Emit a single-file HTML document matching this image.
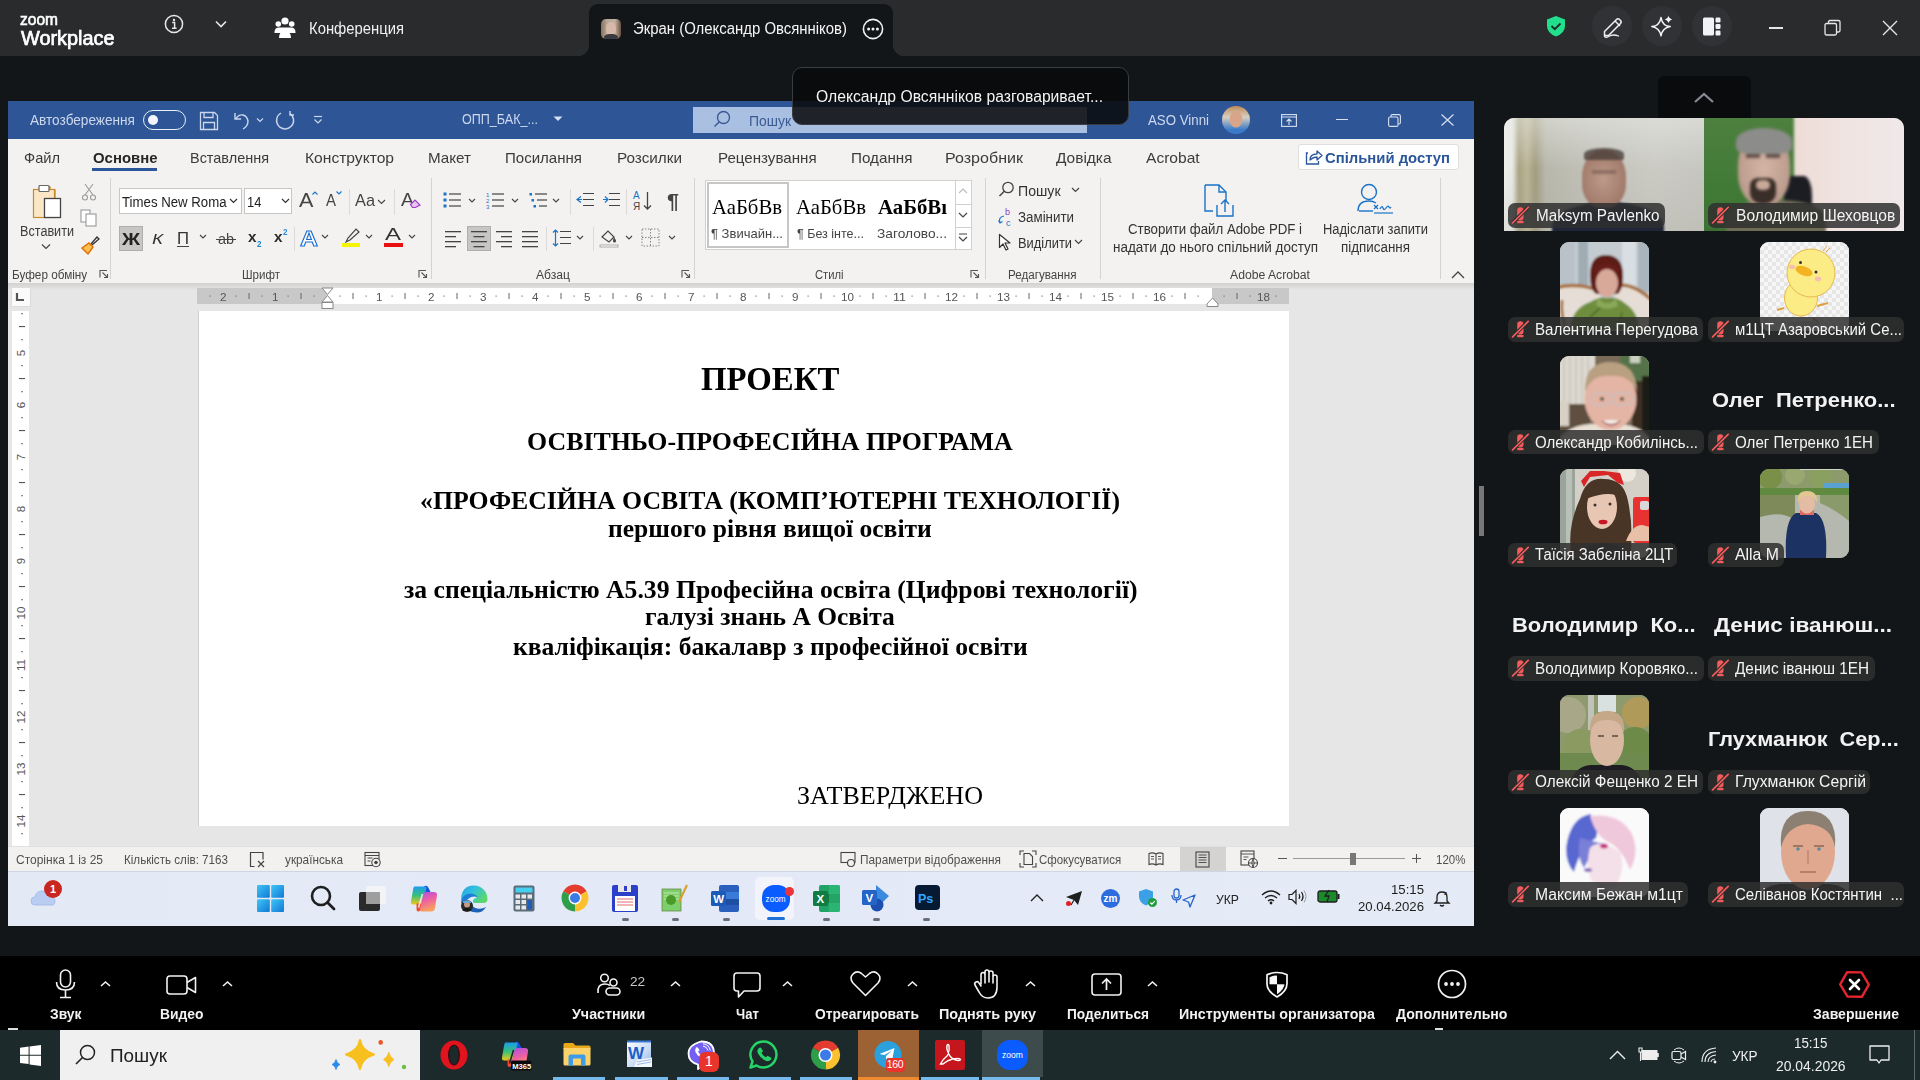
<!DOCTYPE html>
<html><head><meta charset="utf-8">
<style>
*{margin:0;padding:0;box-sizing:border-box}
html,body{width:1920px;height:1080px;overflow:hidden;background:#131619;font-family:"Liberation Sans",sans-serif;position:relative}
.a{position:absolute}
.t{position:absolute;white-space:pre;line-height:normal;transform-origin:0 0}
svg.a{overflow:visible}
</style></head><body>
<div class="a" style="left:0px;top:0px;width:1920px;height:56px;background:#2a2b2d;"></div>
<div class="a" style="left:589px;top:4px;width:304px;height:52px;background:#131619;border-radius:9px 9px 0 0"></div>
<div class="a" style="left:577px;top:44px;width:12px;height:12px;background:radial-gradient(circle at 0 0,#2a2b2d 12px,#131619 12.7px)"></div>
<div class="a" style="left:893px;top:44px;width:12px;height:12px;background:radial-gradient(circle at 100% 0,#2a2b2d 12px,#131619 12.7px)"></div>
<div class="t" style="left:20px;top:9.87px;font-family:'Liberation Sans',sans-serif;font-size:16.5px;color:#fff;transform:scaleX(0.9415);-webkit-text-stroke:0.6px #fff;">zoom</div>
<div class="t" style="left:20.5px;top:26.80px;font-family:'Liberation Sans',sans-serif;font-size:20px;color:#fff;transform:scaleX(0.9934);-webkit-text-stroke:0.7px #fff;">Workplace</div>
<svg class="a" style="left:164px;top:14px;" width="20" height="20" viewBox="0 0 20 20"><circle cx="10" cy="10" r="8.6" fill="none" stroke="#e8e8e8" stroke-width="1.5"/><circle cx="10" cy="6" r="1.2" fill="#e8e8e8"/><path d="M8.2 8.6h2.4v5.6M8 14.3h4.6" stroke="#e8e8e8" stroke-width="1.5" fill="none"/></svg>
<svg class="a" style="left:214px;top:19px;" width="14" height="10" viewBox="0 0 14 10"><path d="M2 2.5l5 5 5-5" stroke="#e8e8e8" stroke-width="1.6" fill="none"/></svg>
<svg class="a" style="left:274px;top:16px;" width="22" height="23" viewBox="0 0 22 23"><circle cx="11" cy="5" r="3.6" fill="#fff"/><circle cx="4.3" cy="8" r="2.8" fill="#fff"/><circle cx="17.7" cy="8" r="2.8" fill="#fff"/><path d="M0.5 16.5q0-5 4.5-5h12q4.5 0 4.5 5v0.5h-21z" fill="#fff"/><path d="M5 22q0-7 6-7t6 7z" fill="#fff"/></svg>
<div class="t" style="left:309px;top:19.52px;font-family:'Liberation Sans',sans-serif;font-size:16px;color:#f0f0f0;transform:scaleX(0.9267);">Конференция</div>
<div class="a" style="left:601px;top:19px;width:20px;height:20px;border-radius:5px;overflow:hidden;background:linear-gradient(90deg,#8a7060,#b8a898 30%,#c0b0a0 70%,#6a5040)"><div class="a" style="left:5px;top:3px;width:10px;height:14px;border-radius:45%;background:#d8b8a8;filter:blur(0.6px)"></div><div class="a" style="left:3px;top:15px;width:14px;height:8px;border-radius:40% 40% 0 0;background:#3a3a40"></div></div>
<div class="t" style="left:633px;top:20.02px;font-family:'Liberation Sans',sans-serif;font-size:16px;color:#f4f4f4;transform:scaleX(0.9322);">Экран (Олександр Овсянніков)</div>
<svg class="a" style="left:862px;top:18px;" width="22" height="22" viewBox="0 0 22 22"><circle cx="11" cy="11" r="9.6" fill="none" stroke="#f0f0f0" stroke-width="1.6"/><circle cx="6.6" cy="11" r="1.5" fill="#f0f0f0"/><circle cx="11" cy="11" r="1.5" fill="#f0f0f0"/><circle cx="15.4" cy="11" r="1.5" fill="#f0f0f0"/></svg>
<svg class="a" style="left:1546px;top:15px;" width="20" height="22" viewBox="0 0 20 22"><path d="M10 1L19 4.5v6.5q0 7-9 10.5Q1 18 1 11V4.5z" fill="#21df8c"/><path d="M5.5 11l3.3 3.2L14.5 8.5" stroke="#1d2a24" stroke-width="1.8" fill="none"/></svg>
<div class="a" style="left:1592px;top:6px;width:40px;height:40px;border-radius:50%;background:#313235"></div>
<div class="a" style="left:1642px;top:6px;width:40px;height:40px;border-radius:50%;background:#313235"></div>
<div class="a" style="left:1692px;top:6px;width:40px;height:40px;border-radius:50%;background:#313235"></div>
<svg class="a" style="left:1601px;top:14px;" width="22" height="24" viewBox="0 0 22 24"><path d="M3.5 17.5L15.5 5.5Q17 4 18.5 5.5L19.5 6.5Q21 8 19.5 9.5L7.5 21.5H3.5z" fill="none" stroke="#f0f0f0" stroke-width="1.5" stroke-linejoin="round"/><path d="M14 7l5 5" stroke="#f0f0f0" stroke-width="1.4"/><path d="M3.5 22.5q1.5 1.5 4 0t5-1.5 5 1" fill="none" stroke="#f0f0f0" stroke-width="1.3" stroke-linecap="round"/></svg>
<svg class="a" style="left:1650px;top:14px;" width="24" height="24" viewBox="0 0 24 24"><path d="M11 3.6Q12.5 12 20.2 12.6Q12.5 14 11 21.8Q9.5 14 1.8 12.6Q9.5 12 11 3.6z" stroke="#f4f4f4" stroke-width="1.5" fill="none" stroke-linejoin="round"/><path d="M18.5 1.5Q19 4.6 22.3 5.4Q19 6.2 18.5 9.3Q18 6.2 14.7 5.4Q18 4.6 18.5 1.5z" fill="#f4f4f4"/></svg>
<svg class="a" style="left:1702px;top:17px;" width="20" height="19" viewBox="0 0 20 19"><rect x="1" y="0.5" width="11" height="18" rx="1.5" fill="#f2f2f4"/><rect x="13.5" y="0.5" width="5" height="5" rx="1.2" fill="#f2f2f4"/><rect x="13.5" y="7" width="5" height="5" rx="1.2" fill="#f2f2f4"/><rect x="13.5" y="13.5" width="5" height="5" rx="1.2" fill="#f2f2f4"/></svg>
<div class="a" style="left:1769px;top:27px;width:14px;height:1.6px;background:#e6e6e6;"></div>
<svg class="a" style="left:1824px;top:19px;" width="18" height="18" viewBox="0 0 18 18"><rect x="1" y="4.5" width="11.5" height="11.5" rx="1.5" fill="none" stroke="#e6e6e6" stroke-width="1.3"/><path d="M4.5 4.5V3q0-1.5 1.5-1.5h8.5q1.5 0 1.5 1.5v8.5q0 1.5-1.5 1.5H12.5" fill="none" stroke="#e6e6e6" stroke-width="1.3"/></svg>
<svg class="a" style="left:1882px;top:20px;" width="16" height="16" viewBox="0 0 16 16"><path d="M1 1L15 15M15 1L1 15" stroke="#e6e6e6" stroke-width="1.4"/></svg>
<div class="a" style="left:8px;top:101px;width:1466px;height:825px;background:#e6e6e6;"></div>
<div class="a" style="left:8px;top:101px;width:1466px;height:38px;background:#2e5596;"></div>
<div class="t" style="left:30px;top:111.68px;font-family:'Liberation Sans',sans-serif;font-size:14.5px;color:#cdd8ee;transform:scaleX(0.9397);">Автозбереження</div>
<div class="a" style="left:143px;top:110px;width:43px;height:20px;border:1.5px solid #e8eef8;border-radius:10px"></div>
<div class="a" style="left:148px;top:115px;width:10px;height:10px;border-radius:50%;background:#f2f6fc"></div>
<svg class="a" style="left:199px;top:111px;" width="20" height="20" viewBox="0 0 20 20"><path d="M1.5 1.5h14l3 3v14h-17z" fill="none" stroke="#c9d6ec" stroke-width="1.3"/><path d="M5 1.5v5h9v-5M4.5 18.5v-7h11v7" fill="none" stroke="#c9d6ec" stroke-width="1.3"/></svg>
<svg class="a" style="left:231px;top:111px;" width="20" height="20" viewBox="0 0 20 20"><path d="M4 2v6h6" fill="none" stroke="#c9d6ec" stroke-width="1.4"/><path d="M4.5 8Q8 3 12 4t5 6q0 5-5 8" fill="none" stroke="#c9d6ec" stroke-width="1.4"/></svg>
<svg class="a" style="left:256px;top:117px;" width="8" height="6" viewBox="0 0 8 6"><path d="M1 1.5l3 3 3-3" fill="none" stroke="#c9d6ec" stroke-width="1.2"/></svg>
<svg class="a" style="left:275px;top:110px;" width="21" height="21" viewBox="0 0 21 21"><path d="M15 3.5A8.5 8.5 0 1 1 6 3" fill="none" stroke="#c9d6ec" stroke-width="1.4"/><path d="M15 1v4h4" fill="none" stroke="#c9d6ec" stroke-width="1.4"/></svg>
<svg class="a" style="left:313px;top:115px;" width="10" height="10" viewBox="0 0 10 10"><path d="M1 1.5h8" stroke="#c9d6ec" stroke-width="1.2"/><path d="M1.5 4.5l3.5 3.5 3.5-3.5" fill="none" stroke="#c9d6ec" stroke-width="1.2"/></svg>
<div class="t" style="left:462px;top:111.48px;font-family:'Liberation Sans',sans-serif;font-size:14.5px;color:#cdd8ee;transform:scaleX(0.8670);">ОПП_БАК_...</div>
<svg class="a" style="left:553px;top:116px;" width="10" height="6" viewBox="0 0 10 6"><path d="M0.5 0.5h9l-4.5 4.5z" fill="#d6e0f0"/></svg>
<div class="a" style="left:693px;top:107px;width:394px;height:26px;background:#aac0e2;"></div>
<svg class="a" style="left:713px;top:110px;" width="18" height="19" viewBox="0 0 18 19"><circle cx="10.5" cy="7.5" r="6" fill="none" stroke="#3b5a93" stroke-width="1.4"/><path d="M6.3 11.7L1.5 16.5" stroke="#3b5a93" stroke-width="1.5"/></svg>
<div class="t" style="left:749px;top:112.88px;font-family:'Liberation Sans',sans-serif;font-size:14.5px;color:#3b5a93;transform:scaleX(0.9607);">Пошук</div>
<div class="t" style="left:1148px;top:111.88px;font-family:'Liberation Sans',sans-serif;font-size:14.5px;color:#cdd8ee;transform:scaleX(0.9154);">ASO Vinni</div>
<div class="a" style="left:1222px;top:106px;width:28px;height:28px;border-radius:50%;background:radial-gradient(ellipse 40% 50% at 50% 48%,#d9a58a 0 55%,transparent 60%),linear-gradient(180deg,#c08a5a 0,#d8cfc0 40%,#3a7ac8 85%)"></div>
<svg class="a" style="left:1281px;top:114px;" width="16" height="13" viewBox="0 0 16 13"><rect x="0.6" y="0.6" width="14.8" height="11.8" fill="none" stroke="#d6e0f0" stroke-width="1.1"/><path d="M0.6 3h14.8M8 11V5M5.5 7.5L8 5l2.5 2.5" fill="none" stroke="#d6e0f0" stroke-width="1.1"/></svg>
<div class="a" style="left:1336px;top:119px;width:12px;height:1.2px;background:#d6e0f0;"></div>
<svg class="a" style="left:1388px;top:114px;" width="13" height="13" viewBox="0 0 13 13"><rect x="0.6" y="3" width="9.4" height="9.4" rx="1.5" fill="none" stroke="#d6e0f0" stroke-width="1.1"/><path d="M3 3V2q0-1.4 1.4-1.4h6.6q1.4 0 1.4 1.4v6.6q0 1.4-1.4 1.4H10" fill="none" stroke="#d6e0f0" stroke-width="1.1"/></svg>
<svg class="a" style="left:1441px;top:114px;" width="13" height="12" viewBox="0 0 13 12"><path d="M0.5 0.5L12.5 11.5M12.5 0.5L0.5 11.5" stroke="#d6e0f0" stroke-width="1.2"/></svg>
<div class="a" style="left:8px;top:139px;width:1466px;height:145px;background:#f3f2f1;"></div>
<div class="a" style="left:8px;top:283px;width:1466px;height:7px;background:linear-gradient(180deg,#d2d1d0,#e6e6e6)"></div>
<div class="t" style="left:24px;top:148.93px;font-family:'Liberation Sans',sans-serif;font-size:15px;color:#3b3b3b;transform:scaleX(0.9759);">Файл</div>
<div class="t" style="left:92.5px;top:148.93px;font-family:'Liberation Sans',sans-serif;font-size:15px;font-weight:bold;color:#262626;transform:scaleX(0.9945);">Основне</div>
<div class="t" style="left:189.6px;top:148.93px;font-family:'Liberation Sans',sans-serif;font-size:15px;color:#3b3b3b;transform:scaleX(0.9638);">Вставлення</div>
<div class="t" style="left:305px;top:148.93px;font-family:'Liberation Sans',sans-serif;font-size:15px;color:#3b3b3b;transform:scaleX(1.0406);">Конструктор</div>
<div class="t" style="left:428px;top:148.93px;font-family:'Liberation Sans',sans-serif;font-size:15px;color:#3b3b3b;transform:scaleX(1.0129);">Макет</div>
<div class="t" style="left:505px;top:148.93px;font-family:'Liberation Sans',sans-serif;font-size:15px;color:#3b3b3b;transform:scaleX(1.0026);">Посилання</div>
<div class="t" style="left:617px;top:148.93px;font-family:'Liberation Sans',sans-serif;font-size:15px;color:#3b3b3b;transform:scaleX(1.0186);">Розсилки</div>
<div class="t" style="left:718px;top:148.93px;font-family:'Liberation Sans',sans-serif;font-size:15px;color:#3b3b3b;transform:scaleX(1.0084);">Рецензування</div>
<div class="t" style="left:851px;top:148.93px;font-family:'Liberation Sans',sans-serif;font-size:15px;color:#3b3b3b;transform:scaleX(1.0150);">Подання</div>
<div class="t" style="left:945px;top:148.93px;font-family:'Liberation Sans',sans-serif;font-size:15px;color:#3b3b3b;transform:scaleX(1.0699);">Розробник</div>
<div class="t" style="left:1056px;top:148.93px;font-family:'Liberation Sans',sans-serif;font-size:15px;color:#3b3b3b;transform:scaleX(1.0284);">Довідка</div>
<div class="t" style="left:1146px;top:148.93px;font-family:'Liberation Sans',sans-serif;font-size:15px;color:#3b3b3b;transform:scaleX(1.0386);">Acrobat</div>
<div class="a" style="left:92px;top:168px;width:65px;height:3px;background:#2b579a;"></div>
<div class="a" style="left:1298px;top:144px;width:161px;height:26px;background:#fff;border:1px solid #e1dfdd;border-radius:3px"></div>
<svg class="a" style="left:1305px;top:148px;" width="18" height="18" viewBox="0 0 18 18"><path d="M3 5H1.5v11h12v-3" fill="none" stroke="#2b579a" stroke-width="1.3"/><path d="M5 12q0-6 7-6V3l5 4.5-5 4.5V9q-4 0-7 3z" fill="none" stroke="#2b579a" stroke-width="1.3" stroke-linejoin="round"/></svg>
<div class="t" style="left:1325px;top:148.93px;font-family:'Liberation Sans',sans-serif;font-size:15px;font-weight:bold;color:#2b579a;transform:scaleX(0.9886);">Спільний доступ</div>
<div class="a" style="left:110px;top:178px;width:1px;height:101px;background:#d4d3d2;"></div>
<div class="a" style="left:431px;top:178px;width:1px;height:101px;background:#d4d3d2;"></div>
<div class="a" style="left:694px;top:178px;width:1px;height:101px;background:#d4d3d2;"></div>
<div class="a" style="left:985px;top:178px;width:1px;height:101px;background:#d4d3d2;"></div>
<div class="a" style="left:1100px;top:178px;width:1px;height:101px;background:#d4d3d2;"></div>
<div class="a" style="left:1440px;top:178px;width:1px;height:101px;background:#d4d3d2;"></div>
<div class="t" style="left:11.5px;top:267.69px;font-family:'Liberation Sans',sans-serif;font-size:12.5px;color:#444;transform:scaleX(0.9393);">Буфер обміну</div>
<div class="t" style="left:242px;top:267.69px;font-family:'Liberation Sans',sans-serif;font-size:12.5px;color:#444;transform:scaleX(0.9237);">Шрифт</div>
<div class="t" style="left:536px;top:267.69px;font-family:'Liberation Sans',sans-serif;font-size:12.5px;color:#444;transform:scaleX(0.9693);">Абзац</div>
<div class="t" style="left:815px;top:267.69px;font-family:'Liberation Sans',sans-serif;font-size:12.5px;color:#444;transform:scaleX(0.8959);">Стилі</div>
<div class="t" style="left:1007.5px;top:267.69px;font-family:'Liberation Sans',sans-serif;font-size:12.5px;color:#444;transform:scaleX(0.9312);">Редагування</div>
<div class="t" style="left:1230px;top:267.69px;font-family:'Liberation Sans',sans-serif;font-size:12.5px;color:#444;transform:scaleX(0.9754);">Adobe Acrobat</div>
<svg class="a" style="left:99px;top:269px;" width="10" height="10" viewBox="0 0 10 10"><path d="M1 8.5V1.5h7M3.5 3.5l5 5M8.5 5v3.5H5" fill="none" stroke="#555" stroke-width="1.1"/></svg>
<svg class="a" style="left:418px;top:269px;" width="10" height="10" viewBox="0 0 10 10"><path d="M1 8.5V1.5h7M3.5 3.5l5 5M8.5 5v3.5H5" fill="none" stroke="#555" stroke-width="1.1"/></svg>
<svg class="a" style="left:681px;top:269px;" width="10" height="10" viewBox="0 0 10 10"><path d="M1 8.5V1.5h7M3.5 3.5l5 5M8.5 5v3.5H5" fill="none" stroke="#555" stroke-width="1.1"/></svg>
<svg class="a" style="left:970px;top:269px;" width="10" height="10" viewBox="0 0 10 10"><path d="M1 8.5V1.5h7M3.5 3.5l5 5M8.5 5v3.5H5" fill="none" stroke="#555" stroke-width="1.1"/></svg>
<svg class="a" style="left:1451px;top:271px;" width="14" height="8" viewBox="0 0 14 8"><path d="M1 7l6-6 6 6" fill="none" stroke="#444" stroke-width="1.3"/></svg>
<svg class="a" style="left:31px;top:183px;" width="36" height="36" viewBox="0 0 36 36"><path d="M3 7h6V4h10v3h5v8" fill="none" stroke="#c98a2b" stroke-width="1.3"/><rect x="2.5" y="6.5" width="21" height="28" fill="#fbe7c6" stroke="#c98a2b" stroke-width="1.2"/><rect x="8" y="2.5" width="10" height="6" rx="1" fill="#fff" stroke="#666" stroke-width="1.2"/><rect x="13.5" y="15.5" width="16" height="19" fill="#fff" stroke="#444" stroke-width="1.3"/></svg>
<div class="t" style="left:20px;top:222.83px;font-family:'Liberation Sans',sans-serif;font-size:14px;color:#3b3b3b;transform:scaleX(0.9019);">Вставити</div>
<svg class="a" style="left:41px;top:243px;" width="10" height="7" viewBox="0 0 10 7"><path d="M1 1.5l4 4 4-4" fill="none" stroke="#444" stroke-width="1.2"/></svg>
<svg class="a" style="left:81px;top:183px;" width="16" height="18" viewBox="0 0 16 18"><path d="M4 1l8 11M12 1L4 12" stroke="#9a9a9a" stroke-width="1.1"/><circle cx="4" cy="14.5" r="2.5" fill="none" stroke="#9a9a9a" stroke-width="1.1"/><circle cx="12" cy="14.5" r="2.5" fill="none" stroke="#9a9a9a" stroke-width="1.1"/></svg>
<svg class="a" style="left:80px;top:209px;" width="19" height="18" viewBox="0 0 19 18"><rect x="1" y="1" width="9" height="12" fill="#fff" stroke="#9a9a9a" stroke-width="1.1"/><rect x="6" y="5" width="10" height="12" fill="#fff" stroke="#9a9a9a" stroke-width="1.1"/></svg>
<svg class="a" style="left:80px;top:235px;" width="20" height="20" viewBox="0 0 20 20"><path d="M11 9l6-7 2 2-7 6" fill="none" stroke="#333" stroke-width="1.3"/><path d="M2 13l7-5 4 4-5 7z" fill="#f8c050" stroke="#e06c00" stroke-width="1.4"/></svg>
<div class="a" style="left:119px;top:188px;width:123px;height:26px;background:#fff;border:1px solid #c8c6c4"></div>
<div class="t" style="left:122px;top:194.33px;font-family:'Liberation Sans',sans-serif;font-size:14px;color:#222;transform:scaleX(0.9446);">Times New Roma</div>
<svg class="a" style="left:229px;top:198px;" width="9" height="6" viewBox="0 0 9 6"><path d="M1 1l3.5 3.5L8 1" fill="none" stroke="#333" stroke-width="1.2"/></svg>
<div class="a" style="left:244px;top:188px;width:48px;height:26px;background:#fff;border:1px solid #c8c6c4"></div>
<div class="t" style="left:246.6px;top:194.33px;font-family:'Liberation Sans',sans-serif;font-size:14px;color:#222;transform:scaleX(0.9244);">14</div>
<svg class="a" style="left:281px;top:198px;" width="9" height="6" viewBox="0 0 9 6"><path d="M1 1l3.5 3.5L8 1" fill="none" stroke="#333" stroke-width="1.2"/></svg>
<div class="t" style="left:298.6px;top:188.90px;font-family:'Liberation Sans',sans-serif;font-size:20px;color:#444;transform:scaleX(1.0792);">A</div>
<svg class="a" style="left:312px;top:191px;" width="6" height="4" viewBox="0 0 6 4"><path d="M0.5 3.5L3 1l2.5 2.5" fill="none" stroke="#1a73c8" stroke-width="1.1"/></svg>
<div class="t" style="left:326px;top:191.52px;font-family:'Liberation Sans',sans-serif;font-size:16px;color:#444;transform:scaleX(0.9370);">A</div>
<svg class="a" style="left:336px;top:191px;" width="6" height="4" viewBox="0 0 6 4"><path d="M0.5 0.5L3 3l2.5-2.5" fill="none" stroke="#1a73c8" stroke-width="1.1"/></svg>
<div class="a" style="left:348.5px;top:189px;width:1px;height:26px;background:#dcdad8;"></div>
<div class="t" style="left:355px;top:190.62px;font-family:'Liberation Sans',sans-serif;font-size:17px;color:#444;transform:scaleX(0.9617);">Aa</div>
<svg class="a" style="left:377px;top:199px;" width="9" height="6" viewBox="0 0 9 6"><path d="M1 1l3.5 3.5L8 1" fill="none" stroke="#444" stroke-width="1.1"/></svg>
<div class="a" style="left:394px;top:189px;width:1px;height:26px;background:#dcdad8;"></div>
<div class="t" style="left:401px;top:189.71px;font-family:'Liberation Sans',sans-serif;font-size:18px;color:#444;transform:scaleX(1.0819);">A</div>
<svg class="a" style="left:409px;top:198px;" width="13" height="10" viewBox="0 0 13 10"><path d="M1.5 6.5L6 2l5 5-4.5 2.5h-3z" fill="#e4c6f0" stroke="#a33cc8" stroke-width="1.2"/></svg>
<div class="a" style="left:119px;top:226px;width:24px;height:25px;background:#c8c6c4;border:1px solid #b0aeac"></div>
<div class="t" style="left:122px;top:229.62px;font-family:'Liberation Sans',sans-serif;font-size:17px;font-weight:bold;color:#222;transform:scaleX(1.1707);">Ж</div>
<div class="t" style="left:152px;top:230.43px;font-family:'Liberation Sans',sans-serif;font-size:15px;color:#333;transform:scaleX(1.2571);font-style:italic;">К</div>
<div class="t" style="left:177px;top:229.52px;font-family:'Liberation Sans',sans-serif;font-size:16px;color:#333;transform:scaleX(1.0435);">П</div>
<div class="a" style="left:177px;top:246px;width:12px;height:1.3px;background:#444;"></div>
<svg class="a" style="left:199px;top:234px;" width="8" height="6" viewBox="0 0 8 6"><path d="M1 1l3 3 3-3" fill="none" stroke="#444" stroke-width="1.1"/></svg>
<div class="t" style="left:218px;top:230.43px;font-family:'Liberation Sans',sans-serif;font-size:15px;color:#444;transform:scaleX(0.9588);">ab</div>
<div class="a" style="left:216px;top:239px;width:20px;height:1.1px;background:#444;"></div>
<div class="t" style="left:248px;top:228.43px;font-family:'Liberation Sans',sans-serif;font-size:15px;font-weight:bold;color:#2a2a2a;transform:scaleX(1.0187);">x</div>
<div class="t" style="left:257px;top:238.85px;font-family:'Liberation Sans',sans-serif;font-size:9px;font-weight:bold;color:#1a8ad0;transform:scaleX(0.8972);">2</div>
<div class="t" style="left:274px;top:228.43px;font-family:'Liberation Sans',sans-serif;font-size:15px;font-weight:bold;color:#2a2a2a;transform:scaleX(1.0187);">x</div>
<div class="t" style="left:283px;top:226.66px;font-family:'Liberation Sans',sans-serif;font-size:9px;font-weight:bold;color:#2a8ae0;transform:scaleX(0.8972);">2</div>
<div class="a" style="left:293.5px;top:227px;width:1px;height:24px;background:#dcdad8;"></div>
<div class="t" style="left:300px;top:226.09px;font-family:'Liberation Sans',sans-serif;font-size:22px;font-weight:bold;color:#1a6dd0;transform:scaleX(1.1327);-webkit-text-stroke:1px #1a6dd0;color:#fff;">A</div>
<svg class="a" style="left:321px;top:234px;" width="8" height="6" viewBox="0 0 8 6"><path d="M1 1l3 3 3-3" fill="none" stroke="#444" stroke-width="1.1"/></svg>
<svg class="a" style="left:341px;top:227px;" width="21" height="20" viewBox="0 0 21 20"><path d="M5 15l2-4 8-9 3 3-9 8z" fill="none" stroke="#444" stroke-width="1.2"/></svg>
<div class="a" style="left:342px;top:242.5px;width:18px;height:4px;background:#f5f500;"></div>
<svg class="a" style="left:365px;top:234px;" width="8" height="6" viewBox="0 0 8 6"><path d="M1 1l3 3 3-3" fill="none" stroke="#444" stroke-width="1.1"/></svg>
<div class="t" style="left:385px;top:224.62px;font-family:'Liberation Sans',sans-serif;font-size:17px;color:#333;transform:scaleX(1.4105);">A</div>
<div class="a" style="left:384px;top:242.5px;width:19px;height:4px;background:#e81010;"></div>
<svg class="a" style="left:408px;top:234px;" width="8" height="6" viewBox="0 0 8 6"><path d="M1 1l3 3 3-3" fill="none" stroke="#444" stroke-width="1.1"/></svg>
<svg class="a" style="left:443px;top:192px;" width="19" height="16" viewBox="0 0 19 16"><rect x="0.5" y="0.5" width="3" height="3" fill="#1a73c8"/><rect x="6" y="1.4" width="12" height="1.2" fill="#444"/><rect x="0.5" y="6.5" width="3" height="3" fill="#1a73c8"/><rect x="6" y="7.4" width="12" height="1.2" fill="#444"/><rect x="0.5" y="12.5" width="3" height="3" fill="#1a73c8"/><rect x="6" y="13.4" width="12" height="1.2" fill="#444"/></svg>
<svg class="a" style="left:468px;top:198px;" width="8" height="6" viewBox="0 0 8 6"><path d="M1 1l3 3 3-3" fill="none" stroke="#444" stroke-width="1.1"/></svg>
<svg class="a" style="left:486px;top:192px;" width="19" height="16" viewBox="0 0 19 16"><text x="0" y="4.5" font-size="6" fill="#1a73c8" font-family="Liberation Sans">1</text><rect x="6" y="1.4" width="12" height="1.2" fill="#444"/><text x="0" y="10.5" font-size="6" fill="#1a73c8" font-family="Liberation Sans">2</text><rect x="6" y="7.4" width="12" height="1.2" fill="#444"/><text x="0" y="16.5" font-size="6" fill="#1a73c8" font-family="Liberation Sans">3</text><rect x="6" y="13.4" width="12" height="1.2" fill="#444"/></svg>
<svg class="a" style="left:511px;top:198px;" width="8" height="6" viewBox="0 0 8 6"><path d="M1 1l3 3 3-3" fill="none" stroke="#444" stroke-width="1.1"/></svg>
<svg class="a" style="left:529px;top:192px;" width="19" height="16" viewBox="0 0 19 16"><rect x="0.5" y="1" width="2.5" height="2.5" fill="#1a73c8"/><rect x="6" y="1.4" width="12" height="1.2" fill="#444"/><rect x="2.5" y="7" width="2.5" height="2.5" fill="#1a73c8"/><rect x="8" y="7.4" width="10" height="1.2" fill="#444"/><rect x="4.5" y="13" width="2.5" height="2.5" fill="#1a73c8"/><rect x="10" y="13.4" width="8" height="1.2" fill="#444"/></svg>
<svg class="a" style="left:552px;top:198px;" width="8" height="6" viewBox="0 0 8 6"><path d="M1 1l3 3 3-3" fill="none" stroke="#444" stroke-width="1.1"/></svg>
<div class="a" style="left:569.5px;top:189px;width:1px;height:26px;background:#dcdad8;"></div>
<svg class="a" style="left:576px;top:192px;" width="18" height="16" viewBox="0 0 18 16"><path d="M7 1.5h11M7 7.5h11M7 13.5h11M0 1.5h0" stroke="#444" stroke-width="1.2"/><path d="M5 4.5L1 7.5l4 3M1 7.5h5" fill="none" stroke="#1a73c8" stroke-width="1.2"/></svg>
<svg class="a" style="left:602px;top:192px;" width="18" height="16" viewBox="0 0 18 16"><path d="M7 1.5h11M7 7.5h11M7 13.5h11" stroke="#444" stroke-width="1.2"/><path d="M1 7.5h5M3 4.5l3 3-3 3" fill="none" stroke="#1a73c8" stroke-width="1.2"/></svg>
<div class="a" style="left:626px;top:189px;width:1px;height:26px;background:#dcdad8;"></div>
<svg class="a" style="left:633px;top:190px;" width="20" height="22" viewBox="0 0 20 22"><text x="0" y="9" font-size="10" fill="#1a73c8" font-family="Liberation Sans">A</text><text x="0" y="20" font-size="10" fill="#444" font-family="Liberation Sans">Я</text><path d="M14.5 2v17M11 15.5l3.5 3.5 3.5-3.5" fill="none" stroke="#444" stroke-width="1.3"/></svg>
<div class="t" style="left:667px;top:189.90px;font-family:'Liberation Sans',sans-serif;font-size:20px;font-weight:bold;color:#444;transform:scaleX(1.0787);">¶</div>
<svg class="a" style="left:445px;top:230px;" width="16" height="17" viewBox="0 0 16 17"><rect x="0" y="1" width="16" height="1.3" fill="#444"/><rect x="0" y="6" width="11" height="1.3" fill="#444"/><rect x="0" y="11" width="16" height="1.3" fill="#444"/><rect x="0" y="16" width="11" height="1.3" fill="#444"/></svg>
<div class="a" style="left:467px;top:226px;width:24px;height:25px;background:#c8c6c4;border:1px solid #b0aeac"></div>
<svg class="a" style="left:471px;top:230px;" width="16" height="17" viewBox="0 0 16 17"><rect x="0.0" y="1" width="16" height="1.3" fill="#444"/><rect x="2.5" y="6" width="11" height="1.3" fill="#444"/><rect x="0.0" y="11" width="16" height="1.3" fill="#444"/><rect x="2.5" y="16" width="11" height="1.3" fill="#444"/></svg>
<svg class="a" style="left:496px;top:230px;" width="16" height="17" viewBox="0 0 16 17"><rect x="0" y="1" width="16" height="1.3" fill="#444"/><rect x="5" y="6" width="11" height="1.3" fill="#444"/><rect x="0" y="11" width="16" height="1.3" fill="#444"/><rect x="5" y="16" width="11" height="1.3" fill="#444"/></svg>
<svg class="a" style="left:522px;top:230px;" width="16" height="17" viewBox="0 0 16 17"><rect x="0" y="1" width="16" height="1.3" fill="#444"/><rect x="0" y="6" width="16" height="1.3" fill="#444"/><rect x="0" y="11" width="16" height="1.3" fill="#444"/><rect x="0" y="16" width="16" height="1.3" fill="#444"/></svg>
<div class="a" style="left:546px;top:227px;width:1px;height:24px;background:#dcdad8;"></div>
<svg class="a" style="left:552px;top:229px;" width="20" height="18" viewBox="0 0 20 18"><path d="M8 2.5h11M8 8.5h11M8 14.5h11" stroke="#444" stroke-width="1.2"/><path d="M3.5 1v16M1 3.5l2.5-2.5 2.5 2.5M1 14.5l2.5 2.5 2.5-2.5" fill="none" stroke="#1a73c8" stroke-width="1.2"/></svg>
<svg class="a" style="left:576px;top:235px;" width="8" height="6" viewBox="0 0 8 6"><path d="M1 1l3 3 3-3" fill="none" stroke="#444" stroke-width="1.1"/></svg>
<div class="a" style="left:592.5px;top:227px;width:1px;height:24px;background:#dcdad8;"></div>
<svg class="a" style="left:599px;top:228px;" width="20" height="20" viewBox="0 0 20 20"><path d="M3 9l6-6 6 6-5 5z" fill="none" stroke="#444" stroke-width="1.2"/><path d="M15 9q2 3 2 4a1.5 1.5 0 0 1-3 0q0-1 1-4" fill="#444"/><rect x="1" y="17" width="18" height="2" fill="#fff" stroke="#999" stroke-width="0.8"/></svg>
<svg class="a" style="left:625px;top:235px;" width="8" height="6" viewBox="0 0 8 6"><path d="M1 1l3 3 3-3" fill="none" stroke="#444" stroke-width="1.1"/></svg>
<svg class="a" style="left:641px;top:228px;" width="19" height="19" viewBox="0 0 19 19"><rect x="1" y="1" width="17" height="17" fill="none" stroke="#888" stroke-width="1" stroke-dasharray="1.5 1.5"/><path d="M9.5 1v17M1 9.5h17" stroke="#888" stroke-width="1" stroke-dasharray="1.5 1.5"/></svg>
<svg class="a" style="left:668px;top:235px;" width="8" height="6" viewBox="0 0 8 6"><path d="M1 1l3 3 3-3" fill="none" stroke="#444" stroke-width="1.1"/></svg>
<div class="a" style="left:705px;top:180px;width:267px;height:70px;background:#fff;border:1px solid #d2d0ce"></div>
<div class="a" style="left:707px;top:182px;width:82px;height:66px;border:2px solid #c8c6c4"></div>
<div class="t" style="left:712px;top:195.29px;font-family:'Liberation Serif',serif;font-size:21px;color:#000;transform:scaleX(0.9877);">АаБбВв</div>
<div class="t" style="left:796px;top:195.29px;font-family:'Liberation Serif',serif;font-size:21px;color:#000;transform:scaleX(0.9877);">АаБбВв</div>
<div class="t" style="left:878px;top:195.29px;font-family:'Liberation Serif',serif;font-size:21px;font-weight:bold;color:#000;transform:scaleX(0.9910);">АаБбВı</div>
<div class="t" style="left:711px;top:226.28px;font-family:'Liberation Sans',sans-serif;font-size:13.5px;color:#444;transform:scaleX(0.9642);">¶ Звичайн...</div>
<div class="t" style="left:797px;top:226.28px;font-family:'Liberation Sans',sans-serif;font-size:13.5px;color:#444;transform:scaleX(0.9271);">¶ Без інте...</div>
<div class="t" style="left:877px;top:226.28px;font-family:'Liberation Sans',sans-serif;font-size:13.5px;color:#444;transform:scaleX(1.0170);">Заголово...</div>
<div class="a" style="left:955px;top:180px;width:1px;height:70px;background:#d2d0ce;"></div>
<div class="a" style="left:955px;top:204px;width:17px;height:1px;background:#d2d0ce;"></div>
<div class="a" style="left:955px;top:227px;width:17px;height:1px;background:#d2d0ce;"></div>
<svg class="a" style="left:958px;top:188px;" width="10" height="6" viewBox="0 0 10 6"><path d="M1 5l4-4 4 4" fill="none" stroke="#bbb" stroke-width="1.1"/></svg>
<svg class="a" style="left:958px;top:212px;" width="10" height="6" viewBox="0 0 10 6"><path d="M1 1l4 4 4-4" fill="none" stroke="#444" stroke-width="1.2"/></svg>
<svg class="a" style="left:958px;top:233px;" width="10" height="9" viewBox="0 0 10 9"><path d="M1 1h8M1 4l4 4 4-4" fill="none" stroke="#444" stroke-width="1.2"/></svg>
<svg class="a" style="left:998px;top:181px;" width="17" height="17" viewBox="0 0 17 17"><circle cx="10" cy="6.5" r="5.2" fill="none" stroke="#444" stroke-width="1.3"/><path d="M6.3 10.2L1.5 15" stroke="#444" stroke-width="1.5"/></svg>
<div class="t" style="left:1018px;top:183.33px;font-family:'Liberation Sans',sans-serif;font-size:14px;color:#333;transform:scaleX(1.0090);">Пошук</div>
<svg class="a" style="left:1071px;top:187px;" width="9" height="6" viewBox="0 0 9 6"><path d="M1 1l3.5 3.5L8 1" fill="none" stroke="#444" stroke-width="1.2"/></svg>
<svg class="a" style="left:997px;top:207px;" width="18" height="20" viewBox="0 0 18 20"><text x="8" y="8" font-size="9" fill="#8b3dc8" font-family="Liberation Sans">b</text><text x="9" y="19" font-size="9" fill="#1a73c8" font-family="Liberation Sans">c</text><path d="M7 9q-6 1-4 7M1.5 13.5l1.5 2.5 2.5-1.5" fill="none" stroke="#1a73c8" stroke-width="1.2"/></svg>
<div class="t" style="left:1018px;top:209.33px;font-family:'Liberation Sans',sans-serif;font-size:14px;color:#333;transform:scaleX(0.9529);">Замінити</div>
<svg class="a" style="left:998px;top:233px;" width="15" height="18" viewBox="0 0 15 18"><path d="M1.5 1.5v13l3.5-3.5 3 6 2-1-3-6h5z" fill="#fff" stroke="#333" stroke-width="1.2" stroke-linejoin="round"/></svg>
<div class="t" style="left:1018px;top:235.33px;font-family:'Liberation Sans',sans-serif;font-size:14px;color:#333;transform:scaleX(0.9204);">Виділити</div>
<svg class="a" style="left:1074px;top:239px;" width="9" height="6" viewBox="0 0 9 6"><path d="M1 1l3.5 3.5L8 1" fill="none" stroke="#444" stroke-width="1.2"/></svg>
<svg class="a" style="left:1203px;top:184px;" width="32" height="34" viewBox="0 0 32 34"><path d="M2 1h14l7 7v10" fill="none" stroke="#1a73c8" stroke-width="1.4"/><path d="M16 1v7h7" fill="none" stroke="#1a73c8" stroke-width="1.4"/><path d="M2 1v26h8" fill="none" stroke="#1a73c8" stroke-width="1.4"/><path d="M14 21v11h16V21" fill="none" stroke="#1a73c8" stroke-width="1.4"/><path d="M22 28V16M18 20l4-4 4 4" fill="none" stroke="#1a73c8" stroke-width="1.4"/></svg>
<div class="t" style="left:1127.5px;top:221.33px;font-family:'Liberation Sans',sans-serif;font-size:14px;color:#333;transform:scaleX(0.9463);">Створити файл Adobe PDF і</div>
<div class="t" style="left:1112.5px;top:239.33px;font-family:'Liberation Sans',sans-serif;font-size:14px;color:#333;transform:scaleX(0.9627);">надати до нього спільний доступ</div>
<svg class="a" style="left:1357px;top:183px;" width="37" height="32" viewBox="0 0 37 32"><circle cx="12" cy="9" r="7.5" fill="none" stroke="#1a73c8" stroke-width="1.4"/><path d="M1 28q0-10 11-10q4 0 7 2" fill="none" stroke="#1a73c8" stroke-width="1.4"/><path d="M2 28h14" stroke="#1a73c8" stroke-width="1.4"/><path d="M17 22l4 4M21 22l-4 4" stroke="#1a73c8" stroke-width="1.3"/><path d="M23 26q2-4 3-1t3 0 3-1 2 0" fill="none" stroke="#1a73c8" stroke-width="1.3"/><path d="M17 30h19" stroke="#1a73c8" stroke-width="1.2"/></svg>
<div class="t" style="left:1323px;top:221.33px;font-family:'Liberation Sans',sans-serif;font-size:14px;color:#333;transform:scaleX(0.9227);">Надіслати запити</div>
<div class="t" style="left:1341px;top:239.33px;font-family:'Liberation Sans',sans-serif;font-size:14px;color:#333;transform:scaleX(0.9571);">підписання</div>
<div class="a" style="left:8px;top:290px;width:1466px;height:21px;background:#e6e6e6;"></div>
<div class="a" style="left:11px;top:287px;width:20px;height:20px;background:#fafafa;border:1px solid #dcdcdc"></div>
<svg class="a" style="left:15px;top:292px;" width="10" height="10" viewBox="0 0 10 10"><path d="M2 1v7h7" fill="none" stroke="#555" stroke-width="2.2"/></svg>
<div class="a" style="left:197px;top:288px;width:1092px;height:16px;background:#fff;"></div>
<div class="a" style="left:197px;top:288px;width:130px;height:16px;background:#c8c8c8;"></div>
<div class="a" style="left:1212px;top:288px;width:77px;height:16px;background:#c8c8c8;"></div>
<svg class="a" style="left:197px;top:288px" width="1092" height="16"><rect x="12.5" y="7.5" width="1.2" height="1.2" fill="#777"/><rect x="38.5" y="7.5" width="1.2" height="1.2" fill="#777"/><rect x="51.5" y="5" width="1" height="6" fill="#666"/><rect x="64.5" y="7.5" width="1.2" height="1.2" fill="#777"/><rect x="90.5" y="7.5" width="1.2" height="1.2" fill="#777"/><rect x="103.5" y="5" width="1" height="6" fill="#666"/><rect x="116.5" y="7.5" width="1.2" height="1.2" fill="#777"/><rect x="142.5" y="7.5" width="1.2" height="1.2" fill="#777"/><rect x="155.5" y="5" width="1" height="6" fill="#666"/><rect x="168.5" y="7.5" width="1.2" height="1.2" fill="#777"/><rect x="194.5" y="7.5" width="1.2" height="1.2" fill="#777"/><rect x="207.5" y="5" width="1" height="6" fill="#666"/><rect x="220.5" y="7.5" width="1.2" height="1.2" fill="#777"/><rect x="246.5" y="7.5" width="1.2" height="1.2" fill="#777"/><rect x="259.5" y="5" width="1" height="6" fill="#666"/><rect x="272.5" y="7.5" width="1.2" height="1.2" fill="#777"/><rect x="298.5" y="7.5" width="1.2" height="1.2" fill="#777"/><rect x="311.5" y="5" width="1" height="6" fill="#666"/><rect x="324.5" y="7.5" width="1.2" height="1.2" fill="#777"/><rect x="350.5" y="7.5" width="1.2" height="1.2" fill="#777"/><rect x="363.5" y="5" width="1" height="6" fill="#666"/><rect x="376.5" y="7.5" width="1.2" height="1.2" fill="#777"/><rect x="402.5" y="7.5" width="1.2" height="1.2" fill="#777"/><rect x="415.5" y="5" width="1" height="6" fill="#666"/><rect x="428.5" y="7.5" width="1.2" height="1.2" fill="#777"/><rect x="454.5" y="7.5" width="1.2" height="1.2" fill="#777"/><rect x="467.5" y="5" width="1" height="6" fill="#666"/><rect x="480.5" y="7.5" width="1.2" height="1.2" fill="#777"/><rect x="506.5" y="7.5" width="1.2" height="1.2" fill="#777"/><rect x="519.5" y="5" width="1" height="6" fill="#666"/><rect x="532.5" y="7.5" width="1.2" height="1.2" fill="#777"/><rect x="558.5" y="7.5" width="1.2" height="1.2" fill="#777"/><rect x="571.5" y="5" width="1" height="6" fill="#666"/><rect x="584.5" y="7.5" width="1.2" height="1.2" fill="#777"/><rect x="610.5" y="7.5" width="1.2" height="1.2" fill="#777"/><rect x="623.5" y="5" width="1" height="6" fill="#666"/><rect x="636.5" y="7.5" width="1.2" height="1.2" fill="#777"/><rect x="662.5" y="7.5" width="1.2" height="1.2" fill="#777"/><rect x="675.5" y="5" width="1" height="6" fill="#666"/><rect x="688.5" y="7.5" width="1.2" height="1.2" fill="#777"/><rect x="714.5" y="7.5" width="1.2" height="1.2" fill="#777"/><rect x="727.5" y="5" width="1" height="6" fill="#666"/><rect x="740.5" y="7.5" width="1.2" height="1.2" fill="#777"/><rect x="766.5" y="7.5" width="1.2" height="1.2" fill="#777"/><rect x="779.5" y="5" width="1" height="6" fill="#666"/><rect x="792.5" y="7.5" width="1.2" height="1.2" fill="#777"/><rect x="818.5" y="7.5" width="1.2" height="1.2" fill="#777"/><rect x="831.5" y="5" width="1" height="6" fill="#666"/><rect x="844.5" y="7.5" width="1.2" height="1.2" fill="#777"/><rect x="870.5" y="7.5" width="1.2" height="1.2" fill="#777"/><rect x="883.5" y="5" width="1" height="6" fill="#666"/><rect x="896.5" y="7.5" width="1.2" height="1.2" fill="#777"/><rect x="922.5" y="7.5" width="1.2" height="1.2" fill="#777"/><rect x="935.5" y="5" width="1" height="6" fill="#666"/><rect x="948.5" y="7.5" width="1.2" height="1.2" fill="#777"/><rect x="974.5" y="7.5" width="1.2" height="1.2" fill="#777"/><rect x="987.5" y="5" width="1" height="6" fill="#666"/><rect x="1000.5" y="7.5" width="1.2" height="1.2" fill="#777"/><rect x="1026.5" y="7.5" width="1.2" height="1.2" fill="#777"/><rect x="1039.5" y="5" width="1" height="6" fill="#666"/><rect x="1052.5" y="7.5" width="1.2" height="1.2" fill="#777"/><rect x="1078.5" y="7.5" width="1.2" height="1.2" fill="#777"/></svg>
<div class="t" style="left:219.75px;top:290.59px;font-family:'Liberation Sans',sans-serif;font-size:11.5px;color:#555;transform:scaleX(1.0146);">2</div>
<div class="t" style="left:271.75px;top:290.59px;font-family:'Liberation Sans',sans-serif;font-size:11.5px;color:#555;transform:scaleX(1.0146);">1</div>
<div class="t" style="left:375.75px;top:290.59px;font-family:'Liberation Sans',sans-serif;font-size:11.5px;color:#555;transform:scaleX(1.0146);">1</div>
<div class="t" style="left:427.75px;top:290.59px;font-family:'Liberation Sans',sans-serif;font-size:11.5px;color:#555;transform:scaleX(1.0146);">2</div>
<div class="t" style="left:479.75px;top:290.59px;font-family:'Liberation Sans',sans-serif;font-size:11.5px;color:#555;transform:scaleX(1.0146);">3</div>
<div class="t" style="left:531.75px;top:290.59px;font-family:'Liberation Sans',sans-serif;font-size:11.5px;color:#555;transform:scaleX(1.0146);">4</div>
<div class="t" style="left:583.75px;top:290.59px;font-family:'Liberation Sans',sans-serif;font-size:11.5px;color:#555;transform:scaleX(1.0146);">5</div>
<div class="t" style="left:635.75px;top:290.59px;font-family:'Liberation Sans',sans-serif;font-size:11.5px;color:#555;transform:scaleX(1.0146);">6</div>
<div class="t" style="left:687.75px;top:290.59px;font-family:'Liberation Sans',sans-serif;font-size:11.5px;color:#555;transform:scaleX(1.0146);">7</div>
<div class="t" style="left:739.75px;top:290.59px;font-family:'Liberation Sans',sans-serif;font-size:11.5px;color:#555;transform:scaleX(1.0146);">8</div>
<div class="t" style="left:791.75px;top:290.59px;font-family:'Liberation Sans',sans-serif;font-size:11.5px;color:#555;transform:scaleX(1.0146);">9</div>
<div class="t" style="left:840.5px;top:290.59px;font-family:'Liberation Sans',sans-serif;font-size:11.5px;color:#555;transform:scaleX(1.0159);">10</div>
<div class="t" style="left:892.5px;top:290.59px;font-family:'Liberation Sans',sans-serif;font-size:11.5px;color:#555;transform:scaleX(1.0876);">11</div>
<div class="t" style="left:944.5px;top:290.59px;font-family:'Liberation Sans',sans-serif;font-size:11.5px;color:#555;transform:scaleX(1.0159);">12</div>
<div class="t" style="left:996.5px;top:290.59px;font-family:'Liberation Sans',sans-serif;font-size:11.5px;color:#555;transform:scaleX(1.0159);">13</div>
<div class="t" style="left:1048.5px;top:290.59px;font-family:'Liberation Sans',sans-serif;font-size:11.5px;color:#555;transform:scaleX(1.0159);">14</div>
<div class="t" style="left:1100.5px;top:290.59px;font-family:'Liberation Sans',sans-serif;font-size:11.5px;color:#555;transform:scaleX(1.0159);">15</div>
<div class="t" style="left:1152.5px;top:290.59px;font-family:'Liberation Sans',sans-serif;font-size:11.5px;color:#555;transform:scaleX(1.0159);">16</div>
<div class="t" style="left:1256.5px;top:290.59px;font-family:'Liberation Sans',sans-serif;font-size:11.5px;color:#555;transform:scaleX(1.0159);">18</div>
<svg class="a" style="left:321px;top:287px;" width="13" height="24" viewBox="0 0 13 24"><path d="M1 1h11L6.5 7.5z" fill="#fff" stroke="#888" stroke-width="1"/><path d="M6.5 8.5L12 15H1z" fill="#fff" stroke="#888" stroke-width="1"/><rect x="1" y="15.5" width="11" height="6" fill="#fff" stroke="#888" stroke-width="1"/></svg>
<svg class="a" style="left:1206px;top:297px;" width="13" height="10" viewBox="0 0 13 10"><path d="M6.5 1L12 7v2.5H1V7z" fill="#fff" stroke="#888" stroke-width="1"/></svg>
<div class="a" style="left:12px;top:311px;width:17px;height:535px;background:#fff;"></div>
<svg class="a" style="left:12px;top:311px" width="18" height="535"><rect x="9.4" y="2.0" width="1.3" height="1.3" fill="#555"/><rect x="7" y="15.0" width="6" height="1.1" fill="#555"/><rect x="9.4" y="28.0" width="1.3" height="1.3" fill="#555"/><rect x="9.4" y="54.0" width="1.3" height="1.3" fill="#555"/><rect x="7" y="67.0" width="6" height="1.1" fill="#555"/><rect x="9.4" y="80.0" width="1.3" height="1.3" fill="#555"/><rect x="9.4" y="106.0" width="1.3" height="1.3" fill="#555"/><rect x="7" y="119.0" width="6" height="1.1" fill="#555"/><rect x="9.4" y="132.0" width="1.3" height="1.3" fill="#555"/><rect x="9.4" y="158.0" width="1.3" height="1.3" fill="#555"/><rect x="7" y="171.0" width="6" height="1.1" fill="#555"/><rect x="9.4" y="184.0" width="1.3" height="1.3" fill="#555"/><rect x="9.4" y="210.0" width="1.3" height="1.3" fill="#555"/><rect x="7" y="223.0" width="6" height="1.1" fill="#555"/><rect x="9.4" y="236.0" width="1.3" height="1.3" fill="#555"/><rect x="9.4" y="262.0" width="1.3" height="1.3" fill="#555"/><rect x="7" y="275.0" width="6" height="1.1" fill="#555"/><rect x="9.4" y="288.0" width="1.3" height="1.3" fill="#555"/><rect x="9.4" y="314.0" width="1.3" height="1.3" fill="#555"/><rect x="7" y="327.0" width="6" height="1.1" fill="#555"/><rect x="9.4" y="340.0" width="1.3" height="1.3" fill="#555"/><rect x="9.4" y="366.0" width="1.3" height="1.3" fill="#555"/><rect x="7" y="379.0" width="6" height="1.1" fill="#555"/><rect x="9.4" y="392.0" width="1.3" height="1.3" fill="#555"/><rect x="9.4" y="418.0" width="1.3" height="1.3" fill="#555"/><rect x="7" y="431.0" width="6" height="1.1" fill="#555"/><rect x="9.4" y="444.0" width="1.3" height="1.3" fill="#555"/><rect x="9.4" y="470.0" width="1.3" height="1.3" fill="#555"/><rect x="7" y="483.0" width="6" height="1.1" fill="#555"/><rect x="9.4" y="496.0" width="1.3" height="1.3" fill="#555"/><rect x="9.4" y="522.0" width="1.3" height="1.3" fill="#555"/></svg>
<div class="a" style="left:13px;top:342.5px;width:18px;height:20px"><div style="position:absolute;left:50%;top:50%;transform:translate(-50%,-50%) rotate(-90deg);font-size:11.5px;color:#555;line-height:1;white-space:nowrap">5</div></div>
<div class="a" style="left:13px;top:394.5px;width:18px;height:20px"><div style="position:absolute;left:50%;top:50%;transform:translate(-50%,-50%) rotate(-90deg);font-size:11.5px;color:#555;line-height:1;white-space:nowrap">6</div></div>
<div class="a" style="left:13px;top:446.5px;width:18px;height:20px"><div style="position:absolute;left:50%;top:50%;transform:translate(-50%,-50%) rotate(-90deg);font-size:11.5px;color:#555;line-height:1;white-space:nowrap">7</div></div>
<div class="a" style="left:13px;top:498.5px;width:18px;height:20px"><div style="position:absolute;left:50%;top:50%;transform:translate(-50%,-50%) rotate(-90deg);font-size:11.5px;color:#555;line-height:1;white-space:nowrap">8</div></div>
<div class="a" style="left:13px;top:550.5px;width:18px;height:20px"><div style="position:absolute;left:50%;top:50%;transform:translate(-50%,-50%) rotate(-90deg);font-size:11.5px;color:#555;line-height:1;white-space:nowrap">9</div></div>
<div class="a" style="left:13px;top:602.5px;width:18px;height:20px"><div style="position:absolute;left:50%;top:50%;transform:translate(-50%,-50%) rotate(-90deg);font-size:11.5px;color:#555;line-height:1;white-space:nowrap">10</div></div>
<div class="a" style="left:13px;top:654.5px;width:18px;height:20px"><div style="position:absolute;left:50%;top:50%;transform:translate(-50%,-50%) rotate(-90deg);font-size:11.5px;color:#555;line-height:1;white-space:nowrap">11</div></div>
<div class="a" style="left:13px;top:706.5px;width:18px;height:20px"><div style="position:absolute;left:50%;top:50%;transform:translate(-50%,-50%) rotate(-90deg);font-size:11.5px;color:#555;line-height:1;white-space:nowrap">12</div></div>
<div class="a" style="left:13px;top:758.5px;width:18px;height:20px"><div style="position:absolute;left:50%;top:50%;transform:translate(-50%,-50%) rotate(-90deg);font-size:11.5px;color:#555;line-height:1;white-space:nowrap">13</div></div>
<div class="a" style="left:13px;top:810.5px;width:18px;height:20px"><div style="position:absolute;left:50%;top:50%;transform:translate(-50%,-50%) rotate(-90deg);font-size:11.5px;color:#555;line-height:1;white-space:nowrap">14</div></div>
<div class="a" style="left:199px;top:311px;width:1090px;height:515px;background:#fff;"></div>
<div class="a" style="left:198px;top:311px;width:1px;height:515px;background:#d0d0d0;"></div>
<div class="t" style="left:700.6px;top:360.60px;font-family:'Liberation Serif',serif;font-size:33px;font-weight:bold;color:#000;transform:scaleX(0.9938);">ПРОЕКТ</div>
<div class="t" style="left:527px;top:426.50px;font-family:'Liberation Serif',serif;font-size:25.7px;font-weight:bold;color:#000;transform:scaleX(1.0075);">ОСВІТНЬО-ПРОФЕСІЙНА ПРОГРАМА</div>
<div class="t" style="left:420px;top:485.90px;font-family:'Liberation Serif',serif;font-size:25.7px;font-weight:bold;color:#000;transform:scaleX(1.0034);">«ПРОФЕСІЙНА ОСВІТА (КОМП’ЮТЕРНІ ТЕХНОЛОГІЇ)</div>
<div class="t" style="left:608px;top:514.10px;font-family:'Liberation Serif',serif;font-size:25.7px;font-weight:bold;color:#000;transform:scaleX(0.9958);">першого рівня вищої освіти</div>
<div class="t" style="left:403.8px;top:574.70px;font-family:'Liberation Serif',serif;font-size:25.7px;font-weight:bold;color:#000;transform:scaleX(0.9994);">за спеціальністю А5.39 Професійна освіта (Цифрові технології)</div>
<div class="t" style="left:645px;top:602.40px;font-family:'Liberation Serif',serif;font-size:25.7px;font-weight:bold;color:#000;transform:scaleX(0.9917);">галузі знань А Освіта</div>
<div class="t" style="left:512.7px;top:632.10px;font-family:'Liberation Serif',serif;font-size:25.7px;font-weight:bold;color:#000;transform:scaleX(0.9962);">кваліфікація: бакалавр з професійної освіти</div>
<div class="t" style="left:796.6px;top:781.40px;font-family:'Liberation Serif',serif;font-size:25.7px;color:#000;transform:scaleX(1.0143);">ЗАТВЕРДЖЕНО</div>
<div class="a" style="left:1479px;top:486px;width:5px;height:50px;background:#787878;"></div>
<div class="a" style="left:8px;top:846px;width:1466px;height:25px;background:#f3f1ef;"></div>
<div class="a" style="left:8px;top:846px;width:1466px;height:1px;background:#e2e0de;"></div>
<div class="t" style="left:16px;top:851.53px;font-family:'Liberation Sans',sans-serif;font-size:13px;color:#505050;transform:scaleX(0.9225);">Сторінка 1 із 25</div>
<div class="t" style="left:124px;top:851.53px;font-family:'Liberation Sans',sans-serif;font-size:13px;color:#505050;transform:scaleX(0.8945);">Кількість слів: 7163</div>
<svg class="a" style="left:249px;top:851px;" width="18" height="17" viewBox="0 0 18 17"><path d="M6 1.5H1.5v14h4M6 1.5h8v7" fill="none" stroke="#444" stroke-width="1.2"/><path d="M9 10l6 6M15 10l-6 6" stroke="#444" stroke-width="1.2"/></svg>
<div class="t" style="left:285px;top:851.53px;font-family:'Liberation Sans',sans-serif;font-size:13px;color:#505050;transform:scaleX(0.9074);">українська</div>
<svg class="a" style="left:364px;top:851px;" width="18" height="17" viewBox="0 0 18 17"><rect x="1" y="1.5" width="14" height="13" fill="none" stroke="#444" stroke-width="1.1"/><path d="M1 4.5h14M3.5 7h5M3.5 10h3" stroke="#444" stroke-width="1"/><circle cx="12" cy="11.5" r="4.2" fill="#f3f1ef" stroke="#444" stroke-width="1.1"/><circle cx="12" cy="11.5" r="1.8" fill="#444"/></svg>
<svg class="a" style="left:840px;top:851px;" width="17" height="17" viewBox="0 0 17 17"><rect x="1" y="1.5" width="14" height="10" fill="none" stroke="#444" stroke-width="1.1"/><circle cx="11" cy="12" r="3.5" fill="#f3f1ef" stroke="#444" stroke-width="1.1"/></svg>
<div class="t" style="left:860px;top:851.53px;font-family:'Liberation Sans',sans-serif;font-size:13px;color:#505050;transform:scaleX(0.9116);">Параметри відображення</div>
<svg class="a" style="left:1019px;top:850px;" width="18" height="18" viewBox="0 0 18 18"><path d="M1 5V1h4M13 1h4v4M17 13v4h-4M5 17H1v-4" fill="none" stroke="#444" stroke-width="1.1"/><path d="M5 3.5h5.5l3 3V14.5H5z" fill="none" stroke="#444" stroke-width="1.1"/></svg>
<div class="t" style="left:1039.4px;top:851.53px;font-family:'Liberation Sans',sans-serif;font-size:13px;color:#505050;transform:scaleX(0.8831);">Сфокусуватися</div>
<svg class="a" style="left:1148px;top:851px;" width="17" height="16" viewBox="0 0 17 16"><path d="M1 2.5q3.5-1.5 7 0.5q3.5-2 7-0.5v11q-3.5-1.5-7 0.5q-3.5-2-7-0.5z M8 3v11" fill="none" stroke="#444" stroke-width="1.1"/><path d="M3 5.5h3M3 8h3M10 5.5h3M10 8h3" stroke="#444" stroke-width="0.9"/></svg>
<div class="a" style="left:1180px;top:847px;width:46px;height:24px;background:#d5d3d1;"></div>
<svg class="a" style="left:1195px;top:851px;" width="15" height="17" viewBox="0 0 15 17"><rect x="1" y="1" width="13" height="15" fill="none" stroke="#444" stroke-width="1.1"/><path d="M3.5 4h8M3.5 6.5h8M3.5 9h8M3.5 11.5h8" stroke="#444" stroke-width="0.9"/></svg>
<svg class="a" style="left:1240px;top:850px;" width="19" height="18" viewBox="0 0 19 18"><rect x="1" y="1" width="13" height="14" fill="none" stroke="#444" stroke-width="1.1"/><path d="M1 4h13M3.5 7h5M3.5 9.5h3" stroke="#444" stroke-width="0.9"/><circle cx="13" cy="13" r="4.5" fill="#f3f1ef" stroke="#444" stroke-width="1.1"/><path d="M8.5 13h9M13 8.5q-2.5 4.5 0 9q2.5-4.5 0-9" fill="none" stroke="#444" stroke-width="0.9"/></svg>
<div class="a" style="left:1277.6px;top:858px;width:9px;height:1.2px;background:#555;"></div>
<div class="a" style="left:1293px;top:858px;width:112px;height:1px;background:#999;"></div>
<div class="a" style="left:1350px;top:852.5px;width:5.5px;height:12.5px;background:#777;"></div>
<div class="a" style="left:1411.7px;top:858px;width:9.5px;height:1.2px;background:#555;"></div>
<div class="a" style="left:1415.9px;top:853.5px;width:1.2px;height:9.5px;background:#555;"></div>
<div class="t" style="left:1435.6px;top:851.53px;font-family:'Liberation Sans',sans-serif;font-size:13px;color:#505050;transform:scaleX(0.8842);">120%</div>
<div class="a" style="left:8px;top:871px;width:1466px;height:55px;background:linear-gradient(90deg,#e4eaf5,#e3e9f7 50%,#e5ebf6)"></div>
<div class="a" style="left:8px;top:871px;width:1466px;height:1px;background:#cdd5e6;"></div>
<svg class="a" style="left:30px;top:884px;" width="30" height="24" viewBox="0 0 30 24"><path d="M5 21q-4 0-4-4t4-4q1-6 7-6t7 5q6 0 6 5t-5 4z" fill="#b9cdf2" stroke="#9fb6e6" stroke-width="0.8"/></svg>
<div class="a" style="left:44px;top:880px;width:18px;height:18px;border-radius:50%;background:#c8261e;color:#fff;font-size:11px;line-height:18px;text-align:center;font-weight:bold">1</div>
<svg class="a" style="left:257px;top:885px;" width="27" height="27" viewBox="0 0 27 27"><defs><linearGradient id="wg" x1="0" y1="0" x2="1" y2="1"><stop offset="0" stop-color="#3ec6f5"/><stop offset="1" stop-color="#1178d6"/></linearGradient></defs><rect x="0" y="0" width="12.8" height="12.8" rx="1" fill="url(#wg)"/><rect x="14.2" y="0" width="12.8" height="12.8" rx="1" fill="url(#wg)"/><rect x="0" y="14.2" width="12.8" height="12.8" rx="1" fill="url(#wg)"/><rect x="14.2" y="14.2" width="12.8" height="12.8" rx="1" fill="url(#wg)"/></svg>
<svg class="a" style="left:310px;top:885px;" width="26" height="27" viewBox="0 0 26 27"><circle cx="11" cy="11" r="9" fill="none" stroke="#1e1e1e" stroke-width="2.6"/><path d="M17.5 17.5L24 24" stroke="#1e1e1e" stroke-width="2.8" stroke-linecap="round"/></svg>
<svg class="a" style="left:358px;top:885px;" width="29" height="27" viewBox="0 0 29 27"><rect x="1" y="7" width="21" height="19" rx="2" fill="#2a2a2a"/><rect x="8" y="1" width="20" height="18" rx="2" fill="#f4f4f4" fill-opacity="0.92"/><rect x="8" y="7" width="14" height="12" fill="#9e9e9e"/></svg>
<svg class="a" style="left:410px;top:885px;" width="28" height="27" viewBox="0 0 28 27"><defs><linearGradient id="cg1" x1="0" y1="0" x2="0" y2="1"><stop offset="0" stop-color="#1a9cf0"/><stop offset=".5" stop-color="#38c078"/><stop offset="1" stop-color="#f0c818"/></linearGradient><linearGradient id="cg2" x1="0" y1="0" x2="0.3" y2="1"><stop offset="0" stop-color="#a850e8"/><stop offset=".5" stop-color="#f060a0"/><stop offset="1" stop-color="#f8a060"/></linearGradient></defs><path d="M14 1.5Q16 0 18 2L21 8H14.5z" fill="#1a4ee0"/><path d="M4.5 1.5H15.5Q17 1.5 16.5 3.5L12 17.5Q11.5 19.5 9.5 19.5H3Q0.5 19.5 1 16.5L3 5Q3.5 1.5 4.5 1.5z" fill="url(#cg1)"/><path d="M6.5 18.5H12.5L10.5 24.5Q10 26.5 8.5 26.5Q6.5 26.5 6.5 24.5z" fill="#f04a2a"/><path d="M13.5 9Q14 7 16 7H24Q27.5 7 27 10.5L25 23Q24.5 26.5 21 26.5H11.5Q9.5 26.5 10 24z" fill="url(#cg2)"/><path d="M12.5 9L8.5 22.5" stroke="#f4f6fc" stroke-width="1.6" stroke-opacity="0.85"/></svg>
<svg class="a" style="left:460px;top:885px;" width="28" height="28" viewBox="0 0 28 28"><defs><linearGradient id="eg" x1="0" y1="0" x2="1" y2="0.6"><stop offset="0" stop-color="#2a9ee0"/><stop offset=".45" stop-color="#30c0e0"/><stop offset="1" stop-color="#5ad86a"/></linearGradient></defs><path d="M14 0.5A13.5 13.5 0 0 1 27.5 14Q27.5 18 23.5 18H15Q12.5 18 13 15.5Q14 12.5 17 13Q13 8 7 10Q2 12 1 17Q0.5 0.5 14 0.5z" fill="url(#eg)"/><path d="M1 17Q2 9 10 8.5Q15 8.5 18 12Q12 10.5 8 14Q5 17 6 21Q1.5 20 1 17z" fill="#1b7fd4"/><path d="M5 20.5Q8 27.5 17 27.5Q23 27.5 26 22Q22 24.5 17 23.5Q12 22.5 12 18Q8 18.5 5 20.5z" fill="#1c62b8"/><circle cx="7" cy="21" r="6" fill="#2a2a2a"/><circle cx="7" cy="19.5" r="3" fill="#c89a80"/><path d="M3 16.5q4-2.5 8 0v1.5H3z" fill="#6aa8d8"/><path d="M2.2 25.5q4.8-4.5 9.6 0" fill="#111"/></svg>
<svg class="a" style="left:513px;top:885px;" width="22" height="27" viewBox="0 0 22 27"><rect x="0.5" y="0.5" width="21" height="26" rx="2" fill="#5a6b7a"/><rect x="2.5" y="2.5" width="17" height="5" fill="#46d0f0"/><rect x="2.5" y="9.5" width="4.5" height="4" fill="#e8e8e8"/><rect x="8.5" y="9.5" width="4.5" height="4" fill="#e8e8e8"/><rect x="14.5" y="9.5" width="4.5" height="4" fill="#e8e8e8"/><rect x="2.5" y="15.0" width="4.5" height="4" fill="#e8e8e8"/><rect x="8.5" y="15.0" width="4.5" height="4" fill="#e8e8e8"/><rect x="2.5" y="20.5" width="4.5" height="4" fill="#e8e8e8"/><rect x="8.5" y="20.5" width="4.5" height="4" fill="#e8e8e8"/><rect x="14.5" y="15" width="4.5" height="9.5" fill="#1f5db8"/></svg>
<svg class="a" style="left:561px;top:884px;" width="28" height="28" viewBox="0 0 28 28"><path d="M14 14L2.31 7.25A13.5 13.5 0 0 1 25.69 7.25z" fill="#e33b2e"/><path d="M14 14L25.69 7.25A13.5 13.5 0 0 1 14 27.5z" fill="#fbc02d"/><path d="M14 14L14 27.5A13.5 13.5 0 0 1 2.31 7.25z" fill="#2e9e48"/><circle cx="14" cy="14" r="6.4" fill="#fff"/><circle cx="14" cy="14" r="5" fill="#3b7ae8"/></svg>
<svg class="a" style="left:612px;top:885px;" width="26" height="27" viewBox="0 0 26 27"><rect x="0" y="0" width="26" height="27" rx="2" fill="#2b3fc8"/><rect x="6" y="0" width="13" height="7" fill="#e8e8e8"/><rect x="12" y="1" width="3" height="5" fill="#2b3fc8"/><rect x="3" y="11" width="20" height="15" fill="#fff"/><path d="M5 14h16M5 17h16M5 20h16" stroke="#e05a5a" stroke-width="0.9"/></svg>
<svg class="a" style="left:661px;top:884px;" width="28" height="28" viewBox="0 0 28 28"><rect x="1" y="5" width="19" height="22" fill="#7ccf6a" stroke="#6a8a4a" stroke-width="0.8"/><path d="M3 9h15M3 12h15M3 15h15" stroke="#d8f0c0" stroke-width="0.8"/><circle cx="10" cy="16" r="5" fill="#4a9a2a"/><path d="M26 1l-8 17" stroke="#d8a030" stroke-width="2.2"/></svg>
<svg class="a" style="left:711px;top:885px;" width="28" height="27" viewBox="0 0 28 27"><rect x="8" y="0" width="20" height="27" rx="2" fill="#2a5fbd"/><rect x="8" y="7" width="20" height="7" fill="#3a7ad8"/><rect x="8" y="14" width="20" height="6" fill="#1d4fa3"/><rect x="0" y="6" width="15" height="15" rx="1.5" fill="#1b5ab8"/><text x="2.2" y="18" font-size="11.5" font-weight="bold" fill="#fff" font-family="Liberation Sans">W</text></svg>
<div class="a" style="left:755px;top:877px;width:39px;height:43px;border-radius:5px;background:#f2f3fb;box-shadow:3px 0 0 #e5e8f2"></div>
<svg class="a" style="left:762px;top:885px;" width="28" height="27" viewBox="0 0 28 27"><rect x="0" y="0" width="28" height="27" rx="12" fill="#0b5cff"/><text x="3.6" y="16.5" font-size="8.2" fill="#fff" font-family="Liberation Sans">zoom</text></svg>
<div class="a" style="left:785px;top:886.5px;width:9px;height:9px;border-radius:50%;background:#e8343a"></div>
<div class="a" style="left:767px;top:917px;width:18px;height:3.3px;background:#1f6fd8;border-radius:2px"></div>
<svg class="a" style="left:813px;top:885px;" width="27" height="27" viewBox="0 0 27 27"><rect x="6" y="0" width="21" height="27" rx="2" fill="#21a366"/><rect x="6" y="9" width="21" height="9" fill="#107c41"/><rect x="16" y="0" width="11" height="27" fill="#33c481" fill-opacity="0.55"/><rect x="0" y="6" width="15" height="15" rx="1.5" fill="#107c41"/><text x="3.5" y="18" font-size="11.5" font-weight="bold" fill="#fff" font-family="Liberation Sans">X</text></svg>
<svg class="a" style="left:862px;top:884px;" width="28" height="28" viewBox="0 0 28 28"><path d="M14 1l13 11-13 13z" fill="#3c8ae0"/><circle cx="15" cy="21" r="6.5" fill="#1e4fb0"/><rect x="0" y="6" width="15" height="15" rx="1.5" fill="#2264c8"/><text x="3.5" y="18" font-size="11.5" font-weight="bold" fill="#fff" font-family="Liberation Sans">V</text></svg>
<svg class="a" style="left:915px;top:885px;" width="25" height="25" viewBox="0 0 25 25"><rect x="0" y="0" width="25" height="25" rx="4" fill="#071a33"/><text x="3" y="17.5" font-size="12.5" font-weight="bold" fill="#31a8ff" font-family="Liberation Sans">Ps</text></svg>
<div class="a" style="left:622px;top:917.5px;width:7px;height:3px;background:#6b6e78;border-radius:2px"></div>
<div class="a" style="left:672px;top:917.5px;width:7px;height:3px;background:#6b6e78;border-radius:2px"></div>
<div class="a" style="left:723px;top:917.5px;width:7px;height:3px;background:#6b6e78;border-radius:2px"></div>
<div class="a" style="left:823px;top:917.5px;width:7px;height:3px;background:#6b6e78;border-radius:2px"></div>
<div class="a" style="left:873px;top:917.5px;width:7px;height:3px;background:#6b6e78;border-radius:2px"></div>
<div class="a" style="left:923px;top:917.5px;width:7px;height:3px;background:#6b6e78;border-radius:2px"></div>
<svg class="a" style="left:1030px;top:894px;" width="14" height="8" viewBox="0 0 14 8"><path d="M1 7l6-6 6 6" fill="none" stroke="#222" stroke-width="1.4"/></svg>
<svg class="a" style="left:1065px;top:890px;" width="18" height="16" viewBox="0 0 18 16"><path d="M1 7L17 1l-4 14-4-5z" fill="#1e1e1e"/><path d="M9 10l-3 5" stroke="#1e1e1e" stroke-width="1.2"/></svg>
<div class="a" style="left:1066px;top:901px;width:5px;height:5px;border-radius:50%;background:#e02020"></div>
<div class="a" style="left:1101px;top:888.5px;width:19px;height:19px;border-radius:50%;background:#2d6cdf;color:#fff;font-size:10px;font-weight:bold;line-height:19px;text-align:center">zm</div>
<svg class="a" style="left:1139px;top:888px;" width="19" height="20" viewBox="0 0 19 20"><path d="M7 1l7 2.5v5q0 6-7 9q-7-3-7-9v-5z" fill="#3ca0e6"/><circle cx="13.5" cy="14.5" r="4.5" fill="#1e9e3c"/><path d="M11.3 14.5l1.6 1.6 2.8-3" stroke="#fff" stroke-width="1.2" fill="none"/></svg>
<svg class="a" style="left:1171px;top:888px;" width="25" height="20" viewBox="0 0 25 20"><rect x="3" y="1" width="5" height="9" rx="2.5" fill="none" stroke="#2763c8" stroke-width="1.3"/><path d="M1 7q0 5 4.5 5t4.5-5M5.5 12v3" fill="none" stroke="#2763c8" stroke-width="1.3"/><path d="M12 12l12-5-5 12-1.5-5z" fill="none" stroke="#2763c8" stroke-width="1.3" stroke-linejoin="round"/></svg>
<div class="t" style="left:1215.8px;top:892.24px;font-family:'Liberation Sans',sans-serif;font-size:13px;color:#222;transform:scaleX(0.9341);">УКР</div>
<svg class="a" style="left:1261px;top:889px;" width="20" height="16" viewBox="0 0 20 16"><path d="M1 6q9-8 18 0M4 9q6-5 12 0M7 12q3-2.5 6 0" fill="none" stroke="#1e1e1e" stroke-width="1.4"/><circle cx="10" cy="14" r="1.4" fill="#1e1e1e"/></svg>
<svg class="a" style="left:1288px;top:889px;" width="19" height="16" viewBox="0 0 19 16"><path d="M1 5.5h3l4-4v13l-4-4H1z" fill="none" stroke="#1e1e1e" stroke-width="1.2"/><path d="M11 5q1.5 2.5 0 5M13.5 3q3 4.5 0 9" fill="none" stroke="#1e1e1e" stroke-width="1.2"/><path d="M16 1.5q4 6 0 12" fill="none" stroke="#999" stroke-width="1"/></svg>
<svg class="a" style="left:1317px;top:889px;" width="23" height="14" viewBox="0 0 23 14"><rect x="1" y="2" width="19" height="11" rx="2" fill="#1a8a2a" stroke="#1e1e1e" stroke-width="1.3"/><rect x="20.5" y="5" width="2" height="5" fill="#1e1e1e"/><path d="M12 1l-4 6h4l-2 6" stroke="#1e1e1e" stroke-width="1.3" fill="none"/></svg>
<div class="t" style="left:1391px;top:881.58px;font-family:'Liberation Sans',sans-serif;font-size:13.5px;color:#1e1e1e;transform:scaleX(0.9764);">15:15</div>
<div class="t" style="left:1358px;top:899.48px;font-family:'Liberation Sans',sans-serif;font-size:13.5px;color:#1e1e1e;transform:scaleX(0.9766);">20.04.2026</div>
<svg class="a" style="left:1434px;top:889px;" width="17" height="18" viewBox="0 0 17 18"><path d="M3 12V8q0-5 5-5t5 5v4l2 2H1z" fill="none" stroke="#1e1e1e" stroke-width="1.3"/><path d="M6 16q2 2 4 0" fill="none" stroke="#1e1e1e" stroke-width="1.3"/><text x="10" y="6" font-size="6" font-weight="bold" fill="#1e1e1e" font-family="Liberation Sans">z</text></svg>
<div class="a" style="left:0px;top:956px;width:1920px;height:74px;background:#000;"></div>
<svg class="a" style="left:55px;top:969px;" width="21" height="30" viewBox="0 0 21 30"><rect x="5.5" y="1" width="10" height="17" rx="5" fill="none" stroke="#f2f2f2" stroke-width="1.6"/><path d="M1.5 13q0 8 9 8t9-8M10.5 21v7M5 28.5h11" fill="none" stroke="#f2f2f2" stroke-width="1.6"/></svg>
<svg class="a" style="left:100px;top:981px;" width="11" height="6" viewBox="0 0 11 6"><path d="M1 5L5.5 1 10 5" fill="none" stroke="#f2f2f2" stroke-width="1.6"/></svg>
<div class="t" style="left:50px;top:1005.42px;font-family:'Liberation Sans',sans-serif;font-size:15px;font-weight:bold;color:#f2f2f2;transform:scaleX(0.9235);">Звук</div>
<svg class="a" style="left:166px;top:975px;" width="31" height="20" viewBox="0 0 31 20"><rect x="1" y="1" width="20" height="18" rx="3" fill="none" stroke="#f2f2f2" stroke-width="1.6"/><path d="M21 7.5l8.5-5v15l-8.5-5" fill="none" stroke="#f2f2f2" stroke-width="1.6" stroke-linejoin="round"/></svg>
<svg class="a" style="left:222px;top:981px;" width="11" height="6" viewBox="0 0 11 6"><path d="M1 5L5.5 1 10 5" fill="none" stroke="#f2f2f2" stroke-width="1.6"/></svg>
<div class="t" style="left:160px;top:1005.42px;font-family:'Liberation Sans',sans-serif;font-size:15px;font-weight:bold;color:#f2f2f2;transform:scaleX(0.9237);">Видео</div>
<svg class="a" style="left:597px;top:973px;" width="24" height="23" viewBox="0 0 24 23"><circle cx="7.5" cy="5" r="3.8" fill="none" stroke="#f2f2f2" stroke-width="1.6"/><path d="M1 20q-1-9 7-9q3 0 5 1.5" fill="none" stroke="#f2f2f2" stroke-width="1.6"/><circle cx="16.5" cy="9.5" r="3.5" fill="none" stroke="#f2f2f2" stroke-width="1.6"/><rect x="9" y="15" width="14" height="7" rx="3.5" fill="none" stroke="#f2f2f2" stroke-width="1.6"/></svg>
<div class="t" style="left:630.3px;top:974.48px;font-family:'Liberation Sans',sans-serif;font-size:13.5px;color:#c8c8c8;transform:scaleX(1.0112);">22</div>
<svg class="a" style="left:670px;top:981px;" width="11" height="6" viewBox="0 0 11 6"><path d="M1 5L5.5 1 10 5" fill="none" stroke="#f2f2f2" stroke-width="1.6"/></svg>
<div class="t" style="left:572.3px;top:1005.42px;font-family:'Liberation Sans',sans-serif;font-size:15px;font-weight:bold;color:#f2f2f2;transform:scaleX(0.9495);">Участники</div>
<svg class="a" style="left:733px;top:972px;" width="28" height="26" viewBox="0 0 28 26"><path d="M4 1h20q3 0 3 3v12q0 3-3 3H11l-5.5 6v-6H4q-3 0-3-3V4q0-3 3-3z" fill="none" stroke="#f2f2f2" stroke-width="1.6" stroke-linejoin="round"/></svg>
<svg class="a" style="left:782px;top:981px;" width="11" height="6" viewBox="0 0 11 6"><path d="M1 5L5.5 1 10 5" fill="none" stroke="#f2f2f2" stroke-width="1.6"/></svg>
<div class="t" style="left:735.8px;top:1005.42px;font-family:'Liberation Sans',sans-serif;font-size:15px;font-weight:bold;color:#f2f2f2;transform:scaleX(0.8691);">Чат</div>
<svg class="a" style="left:850px;top:971px;" width="31" height="26" viewBox="0 0 31 26"><path d="M15.5 24.5L3 12Q-1 7 3 3t8.5-0.5L15.5 6l4-3.5Q24 -1 28 3t0 9z" fill="none" stroke="#f2f2f2" stroke-width="1.6" stroke-linejoin="round"/></svg>
<svg class="a" style="left:907px;top:981px;" width="11" height="6" viewBox="0 0 11 6"><path d="M1 5L5.5 1 10 5" fill="none" stroke="#f2f2f2" stroke-width="1.6"/></svg>
<div class="t" style="left:814.5px;top:1005.42px;font-family:'Liberation Sans',sans-serif;font-size:15px;font-weight:bold;color:#f2f2f2;transform:scaleX(0.9228);">Отреагировать</div>
<svg class="a" style="left:974px;top:969px;" width="26" height="30" viewBox="0 0 26 30"><path d="M7 15V6q0-2.5 2-2.5T11 6v8M11 13V3q0-2 2-2t2 2v10M15 13V4q0-2 2-2t2 2v10M19 14V8q0-2 2-2t2 2v10q0 11-9 11q-6 0-9-6l-4-7q-1-2 1-3t3 1l2 3" fill="none" stroke="#f2f2f2" stroke-width="1.6" stroke-linejoin="round" stroke-linecap="round"/></svg>
<svg class="a" style="left:1025px;top:981px;" width="11" height="6" viewBox="0 0 11 6"><path d="M1 5L5.5 1 10 5" fill="none" stroke="#f2f2f2" stroke-width="1.6"/></svg>
<div class="t" style="left:939px;top:1005.42px;font-family:'Liberation Sans',sans-serif;font-size:15px;font-weight:bold;color:#f2f2f2;transform:scaleX(0.9605);">Поднять руку</div>
<svg class="a" style="left:1091px;top:973px;" width="31" height="23" viewBox="0 0 31 23"><rect x="1" y="1" width="29" height="21" rx="3" fill="none" stroke="#f2f2f2" stroke-width="1.6"/><path d="M15.5 17V6M11 10.5l4.5-4.5 4.5 4.5" fill="none" stroke="#f2f2f2" stroke-width="1.7"/></svg>
<svg class="a" style="left:1147px;top:981px;" width="11" height="6" viewBox="0 0 11 6"><path d="M1 5L5.5 1 10 5" fill="none" stroke="#f2f2f2" stroke-width="1.6"/></svg>
<div class="t" style="left:1066.5px;top:1005.42px;font-family:'Liberation Sans',sans-serif;font-size:15px;font-weight:bold;color:#f2f2f2;transform:scaleX(0.9108);">Поделиться</div>
<svg class="a" style="left:1265px;top:971px;" width="24" height="27" viewBox="0 0 24 27"><defs><clipPath id="shc"><path d="M12 4.5Q16 4.5 19.5 6.2V12.5Q19.5 18.5 12 23.2Q4.5 18.5 4.5 12.5V6.2Q8 4.5 12 4.5z"/></clipPath></defs><g clip-path="url(#shc)"><rect x="0" y="0" width="12" height="13.3" fill="#f8f8f8"/><rect x="12" y="13.3" width="12" height="13" fill="#f8f8f8"/></g><path d="M12 1.5Q17.5 1.5 22 3.8V12.5Q22 20.5 12 26Q2 20.5 2 12.5V3.8Q6.5 1.5 12 1.5z" fill="none" stroke="#f8f8f8" stroke-width="1.7" stroke-linejoin="round"/></svg>
<div class="t" style="left:1179px;top:1005.42px;font-family:'Liberation Sans',sans-serif;font-size:15px;font-weight:bold;color:#f2f2f2;transform:scaleX(0.9511);">Инструменты организатора</div>
<svg class="a" style="left:1437px;top:969px;" width="30" height="30" viewBox="0 0 30 30"><circle cx="15" cy="15" r="13.5" fill="none" stroke="#f2f2f2" stroke-width="1.7"/><circle cx="9" cy="15" r="1.9" fill="#f2f2f2"/><circle cx="15" cy="15" r="1.9" fill="#f2f2f2"/><circle cx="21" cy="15" r="1.9" fill="#f2f2f2"/></svg>
<div class="t" style="left:1396px;top:1005.42px;font-family:'Liberation Sans',sans-serif;font-size:15px;font-weight:bold;color:#f2f2f2;transform:scaleX(0.9420);">Дополнительно</div>
<div class="a" style="left:1435px;top:1028px;width:8px;height:2px;background:#ddd;"></div>
<svg class="a" style="left:1839px;top:969px;" width="31" height="31" viewBox="0 0 31 31"><path d="M15.5 1.5L28 8.5v14L15.5 29.5 3 22.5v-14z" fill="none" stroke="#e5242d" stroke-width="2.4" stroke-linejoin="round" transform="rotate(30 15.5 15.5)"/><path d="M11 11l9 9M20 11l-9 9" stroke="#fff" stroke-width="2.6" stroke-linecap="round"/></svg>
<div class="t" style="left:1812.5px;top:1005.42px;font-family:'Liberation Sans',sans-serif;font-size:15px;font-weight:bold;color:#f2f2f2;transform:scaleX(0.9373);">Завершение</div>
<div class="a" style="left:8px;top:1028px;width:10px;height:2px;background:#ddd;"></div>
<div class="a" style="left:0px;top:1030px;width:1920px;height:50px;background:#1c2a2b;"></div>
<svg class="a" style="left:20px;top:1045px;" width="21" height="21" viewBox="0 0 21 21"><path d="M0 2.8L8.6 1.6v8.2H0zM9.6 1.5L21 0v9.8H9.6zM0 10.8h8.6v8.3L0 17.9zM9.6 10.8H21V21L9.6 19.5z" fill="#fff"/></svg>
<div class="a" style="left:60px;top:1030px;width:360px;height:50px;background:#f0f0f0;"></div>
<svg class="a" style="left:75px;top:1044px;" width="21" height="21" viewBox="0 0 21 21"><circle cx="12.5" cy="8.5" r="7" fill="none" stroke="#222" stroke-width="1.5"/><path d="M7.5 13.5L1 20" stroke="#222" stroke-width="1.6"/></svg>
<div class="t" style="left:110px;top:1044.81px;font-family:'Liberation Sans',sans-serif;font-size:19px;color:#222;transform:scaleX(0.9951);">Пошук</div>
<svg class="a" style="left:330px;top:1038px;" width="80" height="36" viewBox="0 0 80 36"><path d="M30 2Q32 13 44 16.5Q32 20 30 31Q28 20 16 16.5Q28 13 30 2z" fill="#f8c01e" stroke="#f8c01e" stroke-width="2" stroke-linejoin="round"/><path d="M58.8 14.5Q60 19.5 64 21.5Q60 23.5 58.8 28.5Q57.6 23.5 53.6 21.5Q57.6 19.5 58.8 14.5z" fill="#f8c01e" stroke="#f8c01e" stroke-width="1" stroke-linejoin="round"/><path d="M6 21.5Q7 25.5 10 26.5Q7 27.5 6 31.5Q5 27.5 2 26.5Q5 25.5 6 21.5z" fill="#2a8ae8" stroke="#2a8ae8" stroke-width="0.8"/><circle cx="50.7" cy="4.4" r="2.3" fill="#e8562a"/><circle cx="74" cy="29" r="2.2" fill="#6ac040"/></svg>
<div class="a" style="left:858px;top:1030px;width:61px;height:50px;background:#9d6234;"></div>
<div class="a" style="left:982px;top:1030px;width:61px;height:50px;background:#3d4b4d;"></div>
<svg class="a" style="left:440px;top:1040px;" width="28" height="30" viewBox="0 0 28 30"><ellipse cx="14" cy="15" rx="13.5" ry="14.5" fill="#e0141e"/><ellipse cx="14" cy="15" rx="6" ry="10.5" fill="#3a0c10"/><ellipse cx="14" cy="15" rx="4.5" ry="9.5" fill="#1c2a2b"/></svg>
<svg class="a" style="left:501px;top:1041px;" width="30" height="30" viewBox="0 0 30 30"><defs><linearGradient id="mg1" x1="0" y1="0" x2="0" y2="1"><stop offset="0" stop-color="#1a9cf0"/><stop offset=".5" stop-color="#38c078"/><stop offset="1" stop-color="#f0c818"/></linearGradient><linearGradient id="mg2" x1="0" y1="0" x2="0.3" y2="1"><stop offset="0" stop-color="#a850e8"/><stop offset=".6" stop-color="#f060a0"/><stop offset="1" stop-color="#f8a060"/></linearGradient></defs><path d="M14 1.5Q16 0 18 2L21 8H14.5z" fill="#1a4ee0"/><path d="M4.5 1.5H15.5Q17 1.5 16.5 3.5L12 17.5Q11.5 19.5 9.5 19.5H3Q0.5 19.5 1 16.5L3 5Q3.5 1.5 4.5 1.5z" fill="url(#mg1)"/><path d="M6.5 18.5H12.5L10.5 24Q10 26 8.5 26Q6.5 26 6.5 24z" fill="#f04a2a"/><path d="M13.5 9Q14 7 16 7H24Q27.5 7 27 10.5L25 23Q24.5 26 21 26H11.5Q9.5 26 10 24z" fill="url(#mg2)"/><path d="M12.5 9L8.5 22.5" stroke="#1c2a2b" stroke-width="1.6"/><rect x="10" y="19.5" width="20.5" height="10" rx="1.5" fill="#0a0a0a"/><text x="11.2" y="27.6" font-size="7.6" font-weight="bold" fill="#fff" font-family="Liberation Sans">M365</text></svg>
<svg class="a" style="left:563px;top:1042px;" width="28" height="24" viewBox="0 0 28 24"><path d="M0.5 2.5Q0.5 1 2 1H10L12.5 3.5H26Q27.5 3.5 27.5 5V7H0.5z" fill="#e8a818"/><path d="M0.5 6H27.5V22Q27.5 23.5 26 23.5H2Q0.5 23.5 0.5 22z" fill="#fcd36a"/><path d="M5.5 23.5V14.5Q5.5 12.5 7.5 12.5H20.5Q22.5 12.5 22.5 14.5V23.5H18V16.5H10V23.5z" fill="#3d9be8"/></svg>
<svg class="a" style="left:625px;top:1040px;" width="28" height="30" viewBox="0 0 28 30"><defs><linearGradient id="wdg" x1="0" y1="0" x2="1" y2="1"><stop offset="0" stop-color="#ffffff"/><stop offset=".6" stop-color="#c8daf4"/><stop offset="1" stop-color="#8ab0e8"/></linearGradient></defs><path d="M2 1.5H26V27H2z" fill="url(#wdg)"/><path d="M2 1.5H26" stroke="#3a78d8" stroke-width="2"/><text x="3" y="19" font-size="17" font-weight="bold" fill="#1d5fc8" font-family="Liberation Sans">W</text><path d="M12 20L27 17.5V27H9z" fill="#f4f8fe"/><path d="M12 22L26 19.5M12 24.5L26 22" stroke="#8aa8d8" stroke-width="0.8"/></svg>
<svg class="a" style="left:687px;top:1040px;" width="30" height="30" viewBox="0 0 30 30"><path d="M14 1.5q13 0 13 12q0 11-12 11.5l-4 4v-4.5Q1.5 22 1.5 13.5T14 1.5z" fill="#7360f2" stroke="#fff" stroke-width="1.8" stroke-linejoin="round"/><path d="M8.5 8q1-1.5 2.5-0.3l1.5 2.5-1.5 1.3q1.2 2.8 4 4l1.3-1.5 2.5 1.5q1.2 1.2-0.3 2.5q-2 1.5-4.5 0q-4-2.3-5.5-6q-1-2.3 0.5-4z" fill="#fff"/><path d="M16 6q4 0.5 5 4.5M16 3.8q6 0.5 7.3 6.7" fill="none" stroke="#fff" stroke-width="1" /></svg>
<div class="a" style="left:699px;top:1052px;width:20px;height:19.5px;border-radius:6px;background:#e8342a;color:#fff;font-size:14px;line-height:19.5px;text-align:center">1</div>
<svg class="a" style="left:748px;top:1039px;" width="31" height="32" viewBox="0 0 31 32"><path d="M15.5 2.5A13 13 0 1 1 8.5 26.5L2.5 28.5 4.5 22.5A13 13 0 0 1 15.5 2.5z" fill="none" stroke="#25d366" stroke-width="2.5" stroke-linejoin="round"/><path d="M11 9q1.2-1.2 2.2 0l1.8 3.3-1.5 1.5q1.5 3 4.5 4.5l1.5-1.5 3.3 1.8q1.2 1 0 2.2q-2.2 2.5-6 0.5q-4.5-2.5-6.8-6.8q-1.6-3.5 1-5.5z" fill="#25d366"/></svg>
<svg class="a" style="left:810px;top:1040px;" width="31" height="30" viewBox="0 0 31 30"><path d="M15.5 15L2.94 7.75A14.5 14.5 0 0 1 28.06 7.75z" fill="#e33b2e"/><path d="M15.5 15L28.06 7.75A14.5 14.5 0 0 1 15.5 29.5z" fill="#fbc02d"/><path d="M15.5 15L15.5 29.5A14.5 14.5 0 0 1 2.94 7.75z" fill="#2e9e48"/><circle cx="15.5" cy="15" r="7" fill="#fff"/><circle cx="15.5" cy="15" r="5.5" fill="#3b7ae8"/></svg>
<svg class="a" style="left:874px;top:1041px;" width="28" height="28" viewBox="0 0 28 28"><circle cx="14" cy="13.5" r="13.5" fill="#2aa0dc"/><path d="M5.5 13l15-6-2.5 12.5-4-3-2 2v-3.5l6-5.5-7.5 4.5z" fill="#fff"/></svg>
<div class="a" style="left:885.5px;top:1058px;width:19px;height:13.5px;border-radius:4px;background:#e8342a;color:#fff;font-size:10.5px;line-height:13.5px;text-align:center;letter-spacing:-0.3px">160</div>
<svg class="a" style="left:935px;top:1040px;" width="30" height="30" viewBox="0 0 30 30"><rect x="0" y="0" width="30" height="30" rx="2" fill="#c4161c"/><path d="M5.5 24q2.5-5 7-8.5q2.5-5 1.5-10q-1-2-2 0q-1 4.5 3 10.5q3 4 8.5 4.5q2 0 2-1q-1.5-2-8-0.5q-6 1.5-9.5 5z" fill="none" stroke="#fff" stroke-width="1.4"/></svg>
<svg class="a" style="left:997px;top:1040px;" width="31" height="30" viewBox="0 0 31 30"><rect x="0" y="0" width="31" height="30" rx="13" fill="#0b5cff"/><text x="5" y="18" font-size="8.6" fill="#fff" font-family="Liberation Sans">zoom</text></svg>
<div class="a" style="left:553px;top:1077px;width:52px;height:3px;background:#76b9ed;"></div>
<div class="a" style="left:615px;top:1077px;width:53px;height:3px;background:#76b9ed;"></div>
<div class="a" style="left:677px;top:1077px;width:52px;height:3px;background:#76b9ed;"></div>
<div class="a" style="left:739px;top:1077px;width:52px;height:3px;background:#76b9ed;"></div>
<div class="a" style="left:800px;top:1077px;width:52px;height:3px;background:#76b9ed;"></div>
<div class="a" style="left:858px;top:1077px;width:61px;height:3px;background:#f08a30;"></div>
<div class="a" style="left:921px;top:1077px;width:58px;height:3px;background:#76b9ed;"></div>
<div class="a" style="left:982px;top:1077px;width:61px;height:3px;background:#76b9ed;"></div>
<div class="a" style="left:1040px;top:1077px;width:3px;height:3px;background:#1c2a2b;"></div>
<svg class="a" style="left:1609px;top:1050px;" width="17" height="10" viewBox="0 0 17 10"><path d="M1 9l7.5-7.5L16 9" fill="none" stroke="#eee" stroke-width="1.4"/></svg>
<svg class="a" style="left:1638px;top:1047px;" width="21" height="15" viewBox="0 0 21 15"><rect x="4" y="3.5" width="15" height="9" fill="#eee" stroke="#eee" stroke-width="1"/><rect x="19" y="6" width="1.8" height="4" fill="#eee"/><path d="M1 1h3v4H1zM2.5 5v9" stroke="#eee" stroke-width="1.1" fill="none"/></svg>
<svg class="a" style="left:1671px;top:1046px;" width="16" height="19" viewBox="0 0 16 19"><path d="M3 4q5-4 10 0M3 15q5 4 10 0" fill="none" stroke="#eee" stroke-width="1"/><rect x="1" y="5.5" width="9" height="8" rx="1.5" fill="none" stroke="#eee" stroke-width="1.2"/><path d="M10 8l4.5-2.5v8L10 11" fill="none" stroke="#eee" stroke-width="1.2"/></svg>
<svg class="a" style="left:1701px;top:1047px;" width="17" height="17" viewBox="0 0 17 17"><path d="M1 15q0-13 14-14M4 15q0-9.5 11-10.5M7 15q0-6 8-7M10 15q0-2.5 4-3" fill="none" stroke="#eee" stroke-width="1.1"/><circle cx="14" cy="15" r="1.4" fill="#eee"/></svg>
<div class="t" style="left:1732px;top:1047.88px;font-family:'Liberation Sans',sans-serif;font-size:14.5px;color:#eee;transform:scaleX(0.9362);">УКР</div>
<div class="t" style="left:1794px;top:1035.48px;font-family:'Liberation Sans',sans-serif;font-size:14.5px;color:#eee;transform:scaleX(0.9202);">15:15</div>
<div class="t" style="left:1776px;top:1058.48px;font-family:'Liberation Sans',sans-serif;font-size:14.5px;color:#eee;transform:scaleX(0.9590);">20.04.2026</div>
<svg class="a" style="left:1869px;top:1045px;" width="21" height="21" viewBox="0 0 21 21"><path d="M1 1h19v14H12l-2 3-2-3H1z" fill="none" stroke="#eee" stroke-width="1.3" stroke-linejoin="round"/></svg>
<div class="a" style="left:1914px;top:1030px;width:1px;height:50px;background:#5a6a6b;"></div>
<div class="a" style="left:1658px;top:76px;width:93px;height:43px;background:#0a0b0d;border-radius:6px 6px 0 0"></div>
<svg class="a" style="left:1693px;top:92px;" width="22" height="12" viewBox="0 0 22 12"><path d="M2 10l9-8 9 8" fill="none" stroke="#8a8a96" stroke-width="2.2"/></svg>
<div class="a" style="left:1504px;top:118px;width:400px;height:113px;border-radius:10px 10px 0 0;overflow:hidden;background:#c8c8c0">
<div class="a" style="left:0;top:0;width:200px;height:113px;overflow:hidden">
<div class="a" style="left:-4px;top:-4px;width:208px;height:121px;filter:blur(1.2px)">
<div class="a" style="left:0;top:0;width:208px;height:121px;background:linear-gradient(90deg,#f0f2ee 0,#e8eae6 6%,#a8a282 9%,#bcb698 13%,#a29c80 17%,#b8b8ac 22%,#c2c2ba 45%,#cbcbc4 75%,#c6c6c0 100%)"></div>
<div class="a" style="left:0;top:0;width:208px;height:121px;background:linear-gradient(180deg,rgba(235,236,232,.55),rgba(220,220,215,0) 45%,rgba(160,160,150,.2))"></div>
<div class="a" style="left:52px;top:88px;width:112px;height:50px;border-radius:50% 50% 0 0;background:#20263a"></div>
<div class="a" style="left:82px;top:36px;width:44px;height:58px;border-radius:46% 46% 42% 42%;background:radial-gradient(ellipse at 48% 50%,#bc9a8a,#a07868 75%,#806050)"></div>
<div class="a" style="left:84px;top:34px;width:40px;height:12px;border-radius:50% 50% 10% 10%;background:#4a3e3a;opacity:.8"></div>
<div class="a" style="left:92px;top:56px;width:24px;height:4px;background:#7a5a50;opacity:.6"></div>
</div></div>
<div class="a" style="left:200px;top:0;width:200px;height:113px;overflow:hidden">
<div class="a" style="left:-4px;top:-4px;width:208px;height:121px;filter:blur(1.6px)">
<div class="a" style="left:0;top:0;width:94px;height:121px;background:linear-gradient(180deg,#4e8040,#417a36 60%,#3c7032)"></div>
<div class="a" style="left:94px;top:0;width:114px;height:121px;background:linear-gradient(90deg,#eedcd6,#f0e4e2 50%,#eee8ea)"></div>
<div class="a" style="left:84px;top:62px;width:28px;height:64px;border-radius:30% 30% 0 0;background:#1c1d22"></div>
<div class="a" style="left:26px;top:86px;width:100px;height:44px;border-radius:45% 45% 0 0;background:#6e6c56"></div>
<div class="a" style="left:38px;top:17px;width:52px;height:74px;border-radius:46% 46% 42% 42%;background:radial-gradient(ellipse at 50% 50%,#d4b4a4,#b8988a 80%)"></div>
<div class="a" style="left:36px;top:14px;width:56px;height:26px;border-radius:50% 50% 25% 25%;background:#8c8c8a"></div>
<div class="a" style="left:46px;top:40px;width:14px;height:4px;background:#3a2e2a;opacity:.7"></div>
<div class="a" style="left:66px;top:40px;width:14px;height:4px;background:#3a2e2a;opacity:.7"></div>
<div class="a" style="left:50px;top:64px;width:26px;height:26px;border-radius:30% 30% 45% 45%;background:#3a2e28"></div>
<div class="a" style="left:56px;top:66px;width:14px;height:10px;border-radius:40%;background:#c8a898"></div>
</div></div>
</div>
<div class="a" style="left:1508px;top:203px;width:157px;height:24.5px;border-radius:7px;background:rgba(47,47,47,.85)"></div>
<svg class="a" style="left:1512px;top:207px;" width="17" height="17" viewBox="0 0 17 17"><rect x="5.2" y="0.3" width="6.3" height="13.2" rx="3.1" fill="#f25c5c"/><rect x="5.2" y="14" width="6.3" height="2.2" fill="#f25c5c"/><path d="M0.6 15.8L16.2 0.4" stroke="#2b2b2b" stroke-width="3.6"/><path d="M0.6 15.8L16.2 0.4" stroke="#f25c5c" stroke-width="1.7" stroke-linecap="round"/></svg>
<div class="t" style="left:1536px;top:206.70px;font-family:'Liberation Sans',sans-serif;font-size:15.8px;color:#f4f4f4;transform:scaleX(0.9634);">Maksym Pavlenko</div>
<div class="a" style="left:1708px;top:203px;width:192px;height:24.5px;border-radius:7px;background:rgba(47,47,47,.85)"></div>
<svg class="a" style="left:1712px;top:207px;" width="17" height="17" viewBox="0 0 17 17"><rect x="5.2" y="0.3" width="6.3" height="13.2" rx="3.1" fill="#f25c5c"/><rect x="5.2" y="14" width="6.3" height="2.2" fill="#f25c5c"/><path d="M0.6 15.8L16.2 0.4" stroke="#2b2b2b" stroke-width="3.6"/><path d="M0.6 15.8L16.2 0.4" stroke="#f25c5c" stroke-width="1.7" stroke-linecap="round"/></svg>
<div class="t" style="left:1735.7px;top:206.70px;font-family:'Liberation Sans',sans-serif;font-size:15.8px;color:#f4f4f4;transform:scaleX(0.9859);">Володимир Шеховцов</div>
<div class="a" style="left:1560px;top:242.3px;width:89px;height:89px;border-radius:9px;overflow:hidden;background:#c4ccd2"><svg width="89" height="89" viewBox="0 0 89 89" style="position:absolute;left:0;top:0"><defs><filter id="avb1" x="-10%" y="-10%" width="120%" height="120%"><feGaussianBlur stdDeviation="0.8"/></filter></defs><g filter="url(#avb1)"><rect x="-5" y="-5" width="99" height="99" fill="#c4ccd2"/>
<rect x="-5" y="-5" width="20" height="55" fill="#b8c2c8"/><rect x="18" y="-5" width="10" height="50" fill="#a0acb4"/><rect x="62" y="-5" width="14" height="50" fill="#d8dee2"/><rect x="78" y="-5" width="16" height="55" fill="#aab4bc"/>
<path d="M-5 48Q20 40 40 48L40 95H-5z" fill="#e6ded6"/><path d="M55 45Q75 40 94 62V95H55z" fill="#e6ded6"/>
<path d="M-5 46Q15 40 38 48" fill="none" stroke="#a87038" stroke-width="3.5"/><path d="M58 44Q72 40 94 60" fill="none" stroke="#a87038" stroke-width="3.5"/><path d="M2 58Q0 75 8 90" fill="none" stroke="#a87038" stroke-width="3"/>
<path d="M46 13Q30 13 30 33Q30 48 36 52H58Q64 46 63 30Q61 13 46 13z" fill="#5e1a18"/>
<ellipse cx="47" cy="41" rx="11" ry="14" fill="#d8a898"/><path d="M35 32Q46 22 58 31L58 26Q46 18 35 27z" fill="#6a1e1c"/>
<path d="M9 89Q12 66 30 60Q40 54 47 56Q56 54 66 62Q78 70 80 89z" fill="#6e8e3e"/><path d="M38 56Q46 66 56 57L58 64Q46 70 36 63z" fill="#8aa858"/><path d="M30 75L40 66M62 70L58 89" stroke="#3e5a22" stroke-width="1.2"/></g></svg></div>
<div class="a" style="left:1760px;top:242.3px;width:89px;height:89px;border-radius:9px;overflow:hidden;background:#f2f2f2"><svg width="89" height="89" viewBox="0 0 89 89" style="position:absolute;left:0;top:0"><defs><filter id="avb2" x="-10%" y="-10%" width="120%" height="120%"><feGaussianBlur stdDeviation="0.4"/></filter></defs><g filter="url(#avb2)"><rect x="-5" y="-5" width="99" height="99" fill="#f2f2f2"/>
<path d="M0 0h89v89H0z" fill="url(#chk)"/><defs><pattern id="chk" width="8" height="8" patternUnits="userSpaceOnUse"><rect width="8" height="8" fill="#f6f6f6"/><rect width="4" height="4" fill="#e6e6e6"/><rect x="4" y="4" width="4" height="4" fill="#e6e6e6"/></pattern></defs>
<ellipse cx="44" cy="82" rx="16" ry="3" fill="#d0d0d0"/>
<ellipse cx="41" cy="56" rx="16.5" ry="18" fill="#fbec86" stroke="#e8b850" stroke-width="1"/>
<circle cx="51" cy="31" r="24" fill="#fbec86" stroke="#e8b850" stroke-width="1"/>
<ellipse cx="44" cy="29" rx="9" ry="4.5" fill="#f4b420" transform="rotate(20 44 29)"/>
<circle cx="40.5" cy="20.5" r="1.5" fill="#333"/><circle cx="56" cy="30" r="1.5" fill="#333"/>
<ellipse cx="32" cy="25" rx="3" ry="2.2" fill="#f8c0b0"/><ellipse cx="58" cy="37" rx="3.2" ry="2.4" fill="#f8c0b0"/>
<path d="M24 66L17 68M57 64L68 61M53 76L58 80" stroke="#e0a040" stroke-width="2"/><path d="M63 9L67 4M66 10L70 6" stroke="#e0a040" stroke-width="1"/></g></svg></div>
<div class="a" style="left:1508px;top:317px;width:195px;height:24.5px;border-radius:7px;background:rgba(47,47,47,.85)"></div>
<svg class="a" style="left:1512px;top:321px;" width="17" height="17" viewBox="0 0 17 17"><rect x="5.2" y="0.3" width="6.3" height="13.2" rx="3.1" fill="#f25c5c"/><rect x="5.2" y="14" width="6.3" height="2.2" fill="#f25c5c"/><path d="M0.6 15.8L16.2 0.4" stroke="#2b2b2b" stroke-width="3.6"/><path d="M0.6 15.8L16.2 0.4" stroke="#f25c5c" stroke-width="1.7" stroke-linecap="round"/></svg>
<div class="t" style="left:1535px;top:320.70px;font-family:'Liberation Sans',sans-serif;font-size:15.8px;color:#f4f4f4;transform:scaleX(0.9596);">Валентина Перегудова</div>
<div class="a" style="left:1708px;top:317px;width:196px;height:24.5px;border-radius:7px;background:rgba(47,47,47,.85)"></div>
<svg class="a" style="left:1712px;top:321px;" width="17" height="17" viewBox="0 0 17 17"><rect x="5.2" y="0.3" width="6.3" height="13.2" rx="3.1" fill="#f25c5c"/><rect x="5.2" y="14" width="6.3" height="2.2" fill="#f25c5c"/><path d="M0.6 15.8L16.2 0.4" stroke="#2b2b2b" stroke-width="3.6"/><path d="M0.6 15.8L16.2 0.4" stroke="#f25c5c" stroke-width="1.7" stroke-linecap="round"/></svg>
<div class="t" style="left:1735px;top:320.70px;font-family:'Liberation Sans',sans-serif;font-size:15.8px;color:#f4f4f4;transform:scaleX(0.9479);">м1ЦТ Азаровський Се...</div>
<div class="a" style="left:1560px;top:355.7px;width:89px;height:89px;border-radius:9px;overflow:hidden;background:#c8c0b0"><svg width="89" height="89" viewBox="0 0 89 89" style="position:absolute;left:0;top:0"><defs><filter id="avb3" x="-10%" y="-10%" width="120%" height="120%"><feGaussianBlur stdDeviation="0.8"/></filter></defs><g filter="url(#avb3)"><rect x="-5" y="-5" width="99" height="99" fill="#7a6a58"/>
<rect x="-5" y="-5" width="40" height="60" fill="#dedad2"/><path d="M4 0v50M10 0v50M16 0v50M22 0v50M28 0v50" stroke="#c8c4bc" stroke-width="1.6"/>
<rect x="-5" y="48" width="35" height="30" fill="#5e5040"/><rect x="-5" y="45" width="14" height="25" fill="#d8d0c4"/>
<rect x="60" y="-5" width="34" height="30" fill="#56724a"/><rect x="70" y="-5" width="10" height="12" fill="#c8d0c0"/>
<rect x="72" y="25" width="22" height="55" fill="#3e2e24"/><rect x="82" y="20" width="12" height="60" fill="#1e1a18"/>
<path d="M-5 95Q0 70 30 68H60Q89 70 94 95z" fill="#e8e0d4"/>
<ellipse cx="50.5" cy="43" rx="26" ry="31" fill="#e4b4a4"/>
<path d="M25 36Q24 6 50 6Q76 6 77 36Q70 18 50 20Q32 18 25 36z" fill="#b8a080"/>
<ellipse cx="41" cy="43" rx="11" ry="6.5" fill="none" stroke="#c8c0c0" stroke-width="1.4"/><ellipse cx="62" cy="43" rx="11" ry="6.5" fill="none" stroke="#c8c0c0" stroke-width="1.4"/>
<circle cx="42" cy="43" r="2" fill="#4a5a4a"/><circle cx="62" cy="43" r="2" fill="#4a5a4a"/>
<path d="M42 65Q51 70 60 65Q51 63 42 65z" fill="#f4f0ec"/><path d="M42 65Q51 73 60 65" fill="none" stroke="#a06060" stroke-width="1.5"/></g></svg></div>
<div class="t" style="left:1712px;top:389.30px;font-family:'Liberation Sans',sans-serif;font-size:20px;font-weight:bold;color:#f2f2f2;transform:scaleX(1.0962);">Олег  Петренко...</div>
<div class="a" style="left:1508px;top:429.8px;width:196px;height:24.5px;border-radius:7px;background:rgba(47,47,47,.85)"></div>
<svg class="a" style="left:1512px;top:433.8px;" width="17" height="17" viewBox="0 0 17 17"><rect x="5.2" y="0.3" width="6.3" height="13.2" rx="3.1" fill="#f25c5c"/><rect x="5.2" y="14" width="6.3" height="2.2" fill="#f25c5c"/><path d="M0.6 15.8L16.2 0.4" stroke="#2b2b2b" stroke-width="3.6"/><path d="M0.6 15.8L16.2 0.4" stroke="#f25c5c" stroke-width="1.7" stroke-linecap="round"/></svg>
<div class="t" style="left:1535px;top:433.50px;font-family:'Liberation Sans',sans-serif;font-size:15.8px;color:#f4f4f4;transform:scaleX(0.9498);">Олександр Кобилінсь...</div>
<div class="a" style="left:1708px;top:429.8px;width:171px;height:24.5px;border-radius:7px;background:rgba(47,47,47,.85)"></div>
<svg class="a" style="left:1712px;top:433.8px;" width="17" height="17" viewBox="0 0 17 17"><rect x="5.2" y="0.3" width="6.3" height="13.2" rx="3.1" fill="#f25c5c"/><rect x="5.2" y="14" width="6.3" height="2.2" fill="#f25c5c"/><path d="M0.6 15.8L16.2 0.4" stroke="#2b2b2b" stroke-width="3.6"/><path d="M0.6 15.8L16.2 0.4" stroke="#f25c5c" stroke-width="1.7" stroke-linecap="round"/></svg>
<div class="t" style="left:1735px;top:433.50px;font-family:'Liberation Sans',sans-serif;font-size:15.8px;color:#f4f4f4;transform:scaleX(0.9556);">Олег Петренко 1ЕН</div>
<div class="a" style="left:1560px;top:469px;width:89px;height:89px;border-radius:9px;overflow:hidden;background:#c8c4bc"><svg width="89" height="89" viewBox="0 0 89 89" style="position:absolute;left:0;top:0"><defs><filter id="avb4" x="-10%" y="-10%" width="120%" height="120%"><feGaussianBlur stdDeviation="0.6"/></filter></defs><g filter="url(#avb4)"><rect x="-5" y="-5" width="99" height="99" fill="#d4d0c8"/>
<rect x="-5" y="-5" width="20" height="99" fill="#9aa49a"/><rect x="6" y="-5" width="6" height="99" fill="#b8c0b8"/>
<circle cx="67" cy="4" r="9" fill="#ece8e0"/>
<path d="M12 89Q6 60 20 30Q26 8 44 10Q64 10 68 32Q74 60 70 89z" fill="#4a3428"/>
<ellipse cx="42" cy="38" rx="15" ry="22" fill="#e8c6b4"/><path d="M26 30Q30 14 46 14Q60 16 62 30Q52 20 26 30z" fill="#4a3428"/>
<ellipse cx="43" cy="53" rx="4.5" ry="2.3" fill="#c81828"/><circle cx="35" cy="36" r="1.5" fill="#3a3030"/><circle cx="50" cy="35" r="1.5" fill="#3a3030"/>
<path d="M21 12L30 2H44L60 4L64 16L58 14L48 6L30 8L24 18z" fill="#d82828"/>
<rect x="73" y="28" width="20" height="46" rx="3" fill="#e83030"/><rect x="80" y="32" width="9" height="9" rx="2" fill="#d8d8d8"/>
<path d="M66 72Q72 56 82 56L90 58V72z" fill="#e8c0a8"/>
<path d="M20 89Q24 74 44 74Q64 74 68 89z" fill="#2a2424"/></g></svg></div>
<div class="a" style="left:1760px;top:469px;width:89px;height:89px;border-radius:9px;overflow:hidden;background:#9aa88a"><svg width="89" height="89" viewBox="0 0 89 89" style="position:absolute;left:0;top:0"><defs><filter id="avb5" x="-10%" y="-10%" width="120%" height="120%"><feGaussianBlur stdDeviation="0.6"/></filter></defs><g filter="url(#avb5)"><rect x="-5" y="-5" width="99" height="99" fill="#a8aca0"/>
<rect x="-5" y="-5" width="99" height="26" fill="#8c9a6c"/><circle cx="10" cy="8" r="12" fill="#7a9048"/><circle cx="35" cy="6" r="10" fill="#98a870"/><circle cx="60" cy="8" r="11" fill="#8aa060"/><rect x="40" y="-5" width="54" height="6" fill="#d0d4cc"/>
<rect x="64" y="14" width="30" height="8" fill="#5aa0d0"/>
<rect x="-5" y="19" width="99" height="7" fill="#5e8a40"/>
<rect x="-5" y="26" width="99" height="68" fill="#b4b8ae"/><path d="M-5 26h40v25Q20 40 -5 50z" fill="#7e8a5a"/><path d="M60 26h34v30Q75 40 60 34z" fill="#8a9a6a"/>
<path d="M26 89Q24 50 36 44H56Q68 50 66 89z" fill="#1e3262"/>
<rect x="40" y="41" width="14" height="5" fill="#e06a60"/>
<ellipse cx="47" cy="35" rx="8" ry="9.5" fill="#e4bca4"/><path d="M38 34Q36 22 47 22Q58 22 57 34Q54 26 47 27Q41 26 38 34z" fill="#e0c890"/></g></svg></div>
<div class="a" style="left:1508px;top:542.5px;width:169px;height:24.5px;border-radius:7px;background:rgba(47,47,47,.85)"></div>
<svg class="a" style="left:1512px;top:546.5px;" width="17" height="17" viewBox="0 0 17 17"><rect x="5.2" y="0.3" width="6.3" height="13.2" rx="3.1" fill="#f25c5c"/><rect x="5.2" y="14" width="6.3" height="2.2" fill="#f25c5c"/><path d="M0.6 15.8L16.2 0.4" stroke="#2b2b2b" stroke-width="3.6"/><path d="M0.6 15.8L16.2 0.4" stroke="#f25c5c" stroke-width="1.7" stroke-linecap="round"/></svg>
<div class="t" style="left:1534.7px;top:546.20px;font-family:'Liberation Sans',sans-serif;font-size:15.8px;color:#f4f4f4;transform:scaleX(0.9430);">Таїсія Забєліна 2ЦТ</div>
<div class="a" style="left:1708px;top:542.5px;width:76px;height:24.5px;border-radius:7px;background:rgba(47,47,47,.85)"></div>
<svg class="a" style="left:1712px;top:546.5px;" width="17" height="17" viewBox="0 0 17 17"><rect x="5.2" y="0.3" width="6.3" height="13.2" rx="3.1" fill="#f25c5c"/><rect x="5.2" y="14" width="6.3" height="2.2" fill="#f25c5c"/><path d="M0.6 15.8L16.2 0.4" stroke="#2b2b2b" stroke-width="3.6"/><path d="M0.6 15.8L16.2 0.4" stroke="#f25c5c" stroke-width="1.7" stroke-linecap="round"/></svg>
<div class="t" style="left:1735px;top:546.20px;font-family:'Liberation Sans',sans-serif;font-size:15.8px;color:#f4f4f4;transform:scaleX(1.0025);">Alla M</div>
<div class="t" style="left:1512px;top:614.30px;font-family:'Liberation Sans',sans-serif;font-size:20px;font-weight:bold;color:#f2f2f2;transform:scaleX(1.0990);">Володимир  Ко...</div>
<div class="t" style="left:1714px;top:614.30px;font-family:'Liberation Sans',sans-serif;font-size:20px;font-weight:bold;color:#f2f2f2;transform:scaleX(1.1274);">Денис іванюш...</div>
<div class="a" style="left:1508px;top:656px;width:196px;height:24.5px;border-radius:7px;background:rgba(47,47,47,.85)"></div>
<svg class="a" style="left:1512px;top:660px;" width="17" height="17" viewBox="0 0 17 17"><rect x="5.2" y="0.3" width="6.3" height="13.2" rx="3.1" fill="#f25c5c"/><rect x="5.2" y="14" width="6.3" height="2.2" fill="#f25c5c"/><path d="M0.6 15.8L16.2 0.4" stroke="#2b2b2b" stroke-width="3.6"/><path d="M0.6 15.8L16.2 0.4" stroke="#f25c5c" stroke-width="1.7" stroke-linecap="round"/></svg>
<div class="t" style="left:1535px;top:659.70px;font-family:'Liberation Sans',sans-serif;font-size:15.8px;color:#f4f4f4;transform:scaleX(0.9641);">Володимир Коровяко...</div>
<div class="a" style="left:1708px;top:656px;width:167px;height:24.5px;border-radius:7px;background:rgba(47,47,47,.85)"></div>
<svg class="a" style="left:1712px;top:660px;" width="17" height="17" viewBox="0 0 17 17"><rect x="5.2" y="0.3" width="6.3" height="13.2" rx="3.1" fill="#f25c5c"/><rect x="5.2" y="14" width="6.3" height="2.2" fill="#f25c5c"/><path d="M0.6 15.8L16.2 0.4" stroke="#2b2b2b" stroke-width="3.6"/><path d="M0.6 15.8L16.2 0.4" stroke="#f25c5c" stroke-width="1.7" stroke-linecap="round"/></svg>
<div class="t" style="left:1735px;top:659.70px;font-family:'Liberation Sans',sans-serif;font-size:15.8px;color:#f4f4f4;transform:scaleX(0.9696);">Денис іванюш 1ЕН</div>
<div class="a" style="left:1560px;top:694.5px;width:89px;height:89px;border-radius:9px;overflow:hidden;background:#a0a890"><svg width="89" height="89" viewBox="0 0 89 89" style="position:absolute;left:0;top:0"><defs><filter id="avb6" x="-10%" y="-10%" width="120%" height="120%"><feGaussianBlur stdDeviation="0.7"/></filter></defs><g filter="url(#avb6)"><rect x="-5" y="-5" width="99" height="99" fill="#8e9a6e"/>
<circle cx="8" cy="20" r="18" fill="#a8a888"/><circle cx="20" cy="50" r="16" fill="#8a9a60"/><circle cx="78" cy="18" r="16" fill="#b09a5a"/><circle cx="75" cy="50" r="18" fill="#6e8a4a"/>
<rect x="38" y="-5" width="18" height="22" fill="#d8e0e0"/><rect x="28" y="-5" width="6" height="40" fill="#c0c4b8"/>
<rect x="-5" y="58" width="99" height="36" fill="#6e8a50"/>
<path d="M8 95Q12 72 30 70H62Q80 72 84 95z" fill="#1e1e20"/>
<ellipse cx="47" cy="45" rx="17" ry="26" fill="#d8b8a0"/>
<path d="M30 38Q28 16 47 16Q66 16 64 38Q60 24 47 25Q34 24 30 38z" fill="#c4a888"/>
<path d="M38 41h6M52 41h6" stroke="#5a4a40" stroke-width="1.6"/></g></svg></div>
<div class="t" style="left:1708px;top:727.90px;font-family:'Liberation Sans',sans-serif;font-size:20px;font-weight:bold;color:#f2f2f2;transform:scaleX(1.0855);">Глухманюк  Сер...</div>
<div class="a" style="left:1508px;top:769.7px;width:195px;height:24.5px;border-radius:7px;background:rgba(47,47,47,.85)"></div>
<svg class="a" style="left:1512px;top:773.7px;" width="17" height="17" viewBox="0 0 17 17"><rect x="5.2" y="0.3" width="6.3" height="13.2" rx="3.1" fill="#f25c5c"/><rect x="5.2" y="14" width="6.3" height="2.2" fill="#f25c5c"/><path d="M0.6 15.8L16.2 0.4" stroke="#2b2b2b" stroke-width="3.6"/><path d="M0.6 15.8L16.2 0.4" stroke="#f25c5c" stroke-width="1.7" stroke-linecap="round"/></svg>
<div class="t" style="left:1535px;top:773.40px;font-family:'Liberation Sans',sans-serif;font-size:15.8px;color:#f4f4f4;transform:scaleX(0.9683);">Олексій Фещенко 2 ЕН</div>
<div class="a" style="left:1708px;top:769.7px;width:162px;height:24.5px;border-radius:7px;background:rgba(47,47,47,.85)"></div>
<svg class="a" style="left:1712px;top:773.7px;" width="17" height="17" viewBox="0 0 17 17"><rect x="5.2" y="0.3" width="6.3" height="13.2" rx="3.1" fill="#f25c5c"/><rect x="5.2" y="14" width="6.3" height="2.2" fill="#f25c5c"/><path d="M0.6 15.8L16.2 0.4" stroke="#2b2b2b" stroke-width="3.6"/><path d="M0.6 15.8L16.2 0.4" stroke="#f25c5c" stroke-width="1.7" stroke-linecap="round"/></svg>
<div class="t" style="left:1735px;top:773.40px;font-family:'Liberation Sans',sans-serif;font-size:15.8px;color:#f4f4f4;transform:scaleX(0.9979);">Глухманюк Сергій</div>
<div class="a" style="left:1560px;top:808px;width:89px;height:89px;border-radius:9px;overflow:hidden;background:#fafafa"><svg width="89" height="89" viewBox="0 0 89 89" style="position:absolute;left:0;top:0"><defs><filter id="avb7" x="-10%" y="-10%" width="120%" height="120%"><feGaussianBlur stdDeviation="0.8"/></filter></defs><g filter="url(#avb7)"><rect x="-5" y="-5" width="99" height="99" fill="#fafafa"/>
<path d="M30 6Q10 10 6 40Q6 56 14 64Q20 40 36 30Q40 16 30 6z" fill="#5868d0"/>
<path d="M30 8Q60 4 72 26Q80 44 70 62Q62 40 48 34Q36 28 30 8z" fill="#f0c8dc"/>
<path d="M20 30Q16 48 24 60Q34 40 44 36z" fill="#7a80d8"/>
<path d="M30 40Q40 30 60 44Q66 60 56 78Q40 84 30 70Q26 54 30 40z" fill="#f4e0e8"/>
<ellipse cx="44" cy="38" rx="4" ry="2.5" fill="#c83080"/><ellipse cx="28" cy="62" rx="4" ry="2" fill="#8a70c0"/>
<path d="M40 75Q52 86 62 89H36z" fill="#d8d8f0"/></g></svg></div>
<div class="a" style="left:1760px;top:808px;width:89px;height:89px;border-radius:9px;overflow:hidden;background:#e4e6ea"><svg width="89" height="89" viewBox="0 0 89 89" style="position:absolute;left:0;top:0"><defs><filter id="avb8" x="-10%" y="-10%" width="120%" height="120%"><feGaussianBlur stdDeviation="0.6"/></filter></defs><g filter="url(#avb8)"><rect x="-5" y="-5" width="99" height="99" fill="#dfe2e8"/>
<path d="M-5 95Q0 78 20 76H70Q89 78 94 95z" fill="#262626"/>
<ellipse cx="48" cy="44" rx="27" ry="38" fill="#e0a88e"/>
<path d="M21 40Q18 3 48 3Q78 3 75 40Q72 18 48 16Q26 18 21 40z" fill="#8c8072"/>
<path d="M33 38h10M54 38h10" stroke="#8a6a58" stroke-width="1.5"/><circle cx="38" cy="41" r="1.8" fill="#5a8aa0"/><circle cx="59" cy="41" r="1.8" fill="#5a8aa0"/>
<path d="M40 64h16" stroke="#a86a5a" stroke-width="1.4"/><path d="M48 42v14" stroke="#c89078" stroke-width="2"/></g></svg></div>
<div class="a" style="left:1508px;top:882px;width:180px;height:24.5px;border-radius:7px;background:rgba(47,47,47,.85)"></div>
<svg class="a" style="left:1512px;top:886px;" width="17" height="17" viewBox="0 0 17 17"><rect x="5.2" y="0.3" width="6.3" height="13.2" rx="3.1" fill="#f25c5c"/><rect x="5.2" y="14" width="6.3" height="2.2" fill="#f25c5c"/><path d="M0.6 15.8L16.2 0.4" stroke="#2b2b2b" stroke-width="3.6"/><path d="M0.6 15.8L16.2 0.4" stroke="#f25c5c" stroke-width="1.7" stroke-linecap="round"/></svg>
<div class="t" style="left:1535px;top:885.70px;font-family:'Liberation Sans',sans-serif;font-size:15.8px;color:#f4f4f4;transform:scaleX(0.9962);">Максим Бежан м1цт</div>
<div class="a" style="left:1708px;top:882px;width:196px;height:24.5px;border-radius:7px;background:rgba(47,47,47,.85)"></div>
<svg class="a" style="left:1712px;top:886px;" width="17" height="17" viewBox="0 0 17 17"><rect x="5.2" y="0.3" width="6.3" height="13.2" rx="3.1" fill="#f25c5c"/><rect x="5.2" y="14" width="6.3" height="2.2" fill="#f25c5c"/><path d="M0.6 15.8L16.2 0.4" stroke="#2b2b2b" stroke-width="3.6"/><path d="M0.6 15.8L16.2 0.4" stroke="#f25c5c" stroke-width="1.7" stroke-linecap="round"/></svg>
<div class="t" style="left:1735px;top:885.70px;font-family:'Liberation Sans',sans-serif;font-size:15.8px;color:#f4f4f4;transform:scaleX(0.9502);">Селіванов Костянтин  ...</div>
<div class="a" style="left:792px;top:67px;width:337px;height:58px;border-radius:10px;background:rgba(8,9,11,.86);border:1px solid #3a3c40"></div>
<div class="t" style="left:816px;top:88.02px;font-family:'Liberation Sans',sans-serif;font-size:16px;color:#f4f4f4;transform:scaleX(0.9807);">Олександр Овсянніков разговаривает...</div>
</body></html>
